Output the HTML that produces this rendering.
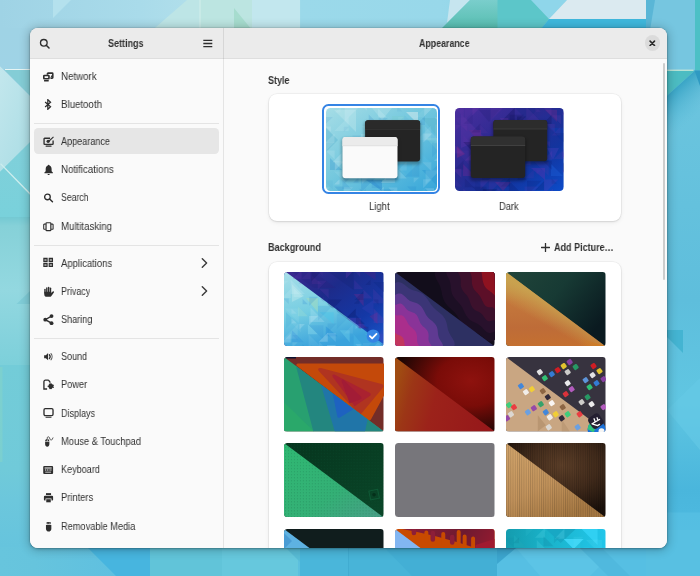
<!DOCTYPE html>
<html>
<head>
<meta charset="utf-8">
<title>Settings - Appearance</title>
<style>
html,body{margin:0;padding:0;}
body{width:700px;height:576px;overflow:hidden;position:relative;background:#6cc6da;font-family:"Liberation Sans",sans-serif;font-size:10px;color:#303030;}
#wall{position:absolute;left:0;top:0;width:700px;height:576px;display:block;}
#win{position:absolute;left:30px;top:28px;width:637px;height:520px;border-radius:8px;overflow:hidden;background:#fafafa;
 box-shadow:0 0 0 0.6px rgba(0,0,0,0.12),0 1px 3px rgba(0,0,0,0.24),0 1px 10px 1.5px rgba(0,0,0,0.2);}
.hdr{position:absolute;top:0;height:30.9px;background:#ebebeb;border-bottom:0.9px solid #dedede;box-sizing:border-box;z-index:2;}
#hdrL{left:0;width:193px;}
#hdrR{left:193px;width:444px;}
#side{position:absolute;left:0;top:30px;width:193px;height:490px;background:#fafafa;}
#vdiv{position:absolute;left:192.7px;top:0;width:1.1px;height:520px;background:rgba(0,0,0,0.085);z-index:3;}
#main{position:absolute;left:194px;top:30px;width:443px;height:490px;background:#fafafa;overflow:hidden;}
.t{will-change:transform;position:absolute;white-space:nowrap;line-height:12px;height:12px;transform-origin:0 50%;}
.b{font-weight:bold;}
.row{position:absolute;left:0;width:193px;height:28px;}
.sel{position:absolute;left:4px;top:69px;width:185px;height:26.9px;border-radius:4.2px;background:#e6e6e6;}
.sep{position:absolute;left:4px;width:185px;height:0.8px;background:#e4e4e4;}
.ic{position:absolute;left:13px;width:11.3px;height:11.3px;display:block;fill:#2e2e2e;}
.chev{position:absolute;left:171px;width:7px;height:10px;display:block;}
.card{position:absolute;background:#fff;border-radius:8px;box-shadow:0 0 0 0.7px rgba(0,0,0,0.05),0 1px 2px rgba(0,0,0,0.09),0 2px 5px rgba(0,0,0,0.05);}
.thumb{position:absolute;border-radius:3.5px;overflow:hidden;display:block;line-height:0;}
.thumb svg{display:block;}
</style>
</head>
<body>
<svg id="wall" viewBox="0 0 700 576">
 <defs>
  <linearGradient id="wL" x1="0" y1="0" x2="0" y2="1"><stop offset="0.0000" stop-color="#9fd3e5"/><stop offset="0.0757" stop-color="#9fd3e6"/><stop offset="0.2135" stop-color="#80d0da"/><stop offset="0.3440" stop-color="#79d1db"/><stop offset="0.3449" stop-color="#74c9d3"/><stop offset="0.3613" stop-color="#86d1d8"/><stop offset="0.4781" stop-color="#93d8e0"/><stop offset="0.5693" stop-color="#84d2dc"/><stop offset="0.6150" stop-color="#7cd0da"/><stop offset="0.6159" stop-color="#73ccd8"/><stop offset="0.8066" stop-color="#70cad9"/><stop offset="0.8613" stop-color="#6cc7dc"/><stop offset="1.0000" stop-color="#62c2de"/></linearGradient>
  <linearGradient id="wP" x1="0" y1="0" x2="1" y2="1">
   <stop offset="0" stop-color="#c3e7ed"/><stop offset="1" stop-color="#a6dbe3"/>
  </linearGradient>
  <linearGradient id="wR" x1="0" y1="0" x2="0" y2="1"><stop offset="0.0000" stop-color="#78c7e0"/><stop offset="0.0791" stop-color="#6ac4de"/><stop offset="0.4545" stop-color="#5ebedc"/><stop offset="0.6522" stop-color="#60c6e2"/><stop offset="0.8300" stop-color="#4ab6dc"/><stop offset="0.8735" stop-color="#4cb8de"/><stop offset="0.8755" stop-color="#54bee2"/><stop offset="1.0000" stop-color="#58c0e2"/></linearGradient>
  <linearGradient id="wT" x1="0" y1="0" x2="1" y2="0">
   <stop offset="0" stop-color="#9fd3e5"/><stop offset="0.200" stop-color="#a9dbea"/><stop offset="0.420" stop-color="#bfe6ec"/><stop offset="0.430" stop-color="#9bd9ea"/><stop offset="0.630" stop-color="#98d8ea"/><stop offset="1" stop-color="#70c6de"/>
  </linearGradient>
  <linearGradient id="wBL" x1="0" y1="0" x2="1" y2="0"><stop offset="0" stop-color="#67c5dd"/><stop offset="0.300" stop-color="#66c4dd"/><stop offset="1" stop-color="#5fc0e0"/></linearGradient>
  <linearGradient id="wRd" gradientUnits="userSpaceOnUse" x1="677" y1="86" x2="700" y2="112"><stop offset="0" stop-color="#38a4c5"/><stop offset="1" stop-color="#5cbcd9" stop-opacity="0"/></linearGradient>
  <linearGradient id="wTe" x1="0" y1="0" x2="0" y2="1">
   <stop offset="0" stop-color="#7acecc"/><stop offset="1" stop-color="#54bcae"/>
  </linearGradient>
 </defs>
 <!-- base -->
 <rect width="700" height="576" fill="#62c0da"/>
 <!-- top strip -->
 <rect x="0" y="0" width="700" height="60" fill="url(#wT)"/>
 <polygon points="53,0 71,0 53,18" fill="#b4e1ed"/>
 <polygon points="187,0 300,0 300,60 118,60" fill="#bde5e6"/>
 <polygon points="200,0 252,0 252,60 200,60" fill="#bce5e0" opacity="0.800"/>
 <rect x="199.500" y="0" width="1" height="40" fill="#d4efec"/>
 <polygon points="234,8 252,30 234,30" fill="#a6dcce"/>
 <polygon points="252,0 300,0 300,60 252,60" fill="#c2e7ee"/>
 <polygon points="450,0 470,0 447,23" fill="#c6e5ef"/>
 <polygon points="470,0 540,0 552,14 540,30 440,30" fill="url(#wTe)"/>
 <polygon points="497.500,0 532,0 549,19 540,30 497.500,30" fill="#5cc6c9"/>
 <polygon points="531,0 567,0 549,19" fill="#8fd6ea"/>
 <polygon points="567,0 646,0 646,19 549,19" fill="#dbeaf0"/>
 <polygon points="549,19 646,19 646,30 540,30" fill="#3fb8dd"/>
 <rect x="646" y="0" width="54" height="70" fill="#76c6e0"/>
 <polygon points="646,0 655,0 650,30 646,30" fill="#5ab6d6"/>
 <rect x="695" y="0" width="5" height="70" fill="#4cc0c6"/>
 <!-- left strip -->
 <rect x="0" y="28" width="60" height="548" fill="url(#wL)"/>
 <polygon points="0,66.400 60,126 60,112 0,171.500" fill="url(#wP)"/>
 <polygon points="0,66.400 40,106 40,132 0,171.500" fill="url(#wP)"/>
 <polygon points="4,69.500 40,69.500 40,105.500" fill="#84cdd6"/>
 <rect x="5" y="69" width="40" height="1" fill="#e6f5f4"/>
 <polygon points="0,164 1.200,163.500 40,203 38.800,204" fill="#cdeeee"/>
 <polygon points="30,291 30,304 16.500,304" fill="#80cdd8"/>
 <rect x="0" y="367" width="2.500" height="95" fill="#80d2cc" opacity="0.700"/>
 <!-- right strip -->
 <rect x="646" y="70" width="54" height="506" fill="url(#wR)"/>
 <polygon points="660,70.500 695,70.500 660,102" fill="#4cbcc2"/>
 <polygon points="660,102 695,70.500 700,70.500 700,150 660,150" fill="url(#wRd)"/>
 <rect x="660" y="69.700" width="33.500" height="1" fill="#dcefd8"/>
 <polygon points="694.500,70.500 700,70.500 700,86" fill="#2f9ac2"/>
 <polygon points="660,330 683,330 683,353" fill="#44b4d2"/>
 <polygon points="667,410 700,378 700,450" fill="#66cae6" opacity="0.600"/>
 <!-- bottom strip -->
 <rect x="30" y="530" width="670" height="46" fill="#5cc0de"/>
 <polygon points="0,547 88,547 88,548 116,576 0,576" fill="url(#wBL)"/>
 <polygon points="88,548 150,548 150,576 116,576" fill="#47b5df"/>
 <rect x="150" y="530" width="72" height="46" fill="#61c4d9"/>
 <rect x="222" y="530" width="76" height="46" fill="#66c8dd"/>
 <polygon points="286,548 300,562 300,548" fill="#58bcd6"/>
 <rect x="300" y="530" width="49" height="46" fill="#4ab6da"/>
 <rect x="348.500" y="530" width="1" height="46" fill="#38a2c8"/>
 <rect x="349" y="530" width="148" height="46" fill="#48b4d8"/>
 <polygon points="385,548 497,548 497,576 412,576" fill="#43afd5"/>
 <rect x="497" y="530" width="149" height="46" fill="#56bfe3"/>
 <polygon points="497,548 516,548 497,564" fill="#3ca6cf"/>
 <polygon points="516,548 580,548 600,566 590,576 540,576" fill="#5cc4e6"/>
 <polygon points="580,548 602,548 630,576 608,576" fill="#50b9de"/>
 <rect x="646" y="530" width="54" height="46" fill="#58c0e2"/>
</svg>

<div id="win">
<div class="hdr" id="hdrL"><svg style="position:absolute;left:8.700px;top:9.700px;width:11.300px;height:11.300px" viewBox="0 0 16 16"><circle cx="6.800" cy="6.800" r="4.700" fill="none" stroke="#2e2e2e" stroke-width="1.900"/><path d="M10.300 10.300 14.200 14.200" stroke="#2e2e2e" stroke-width="2.100" stroke-linecap="round"/></svg><span class="t b" style="left:77.800px;top:10px;transform:scaleX(0.900)">Settings</span><svg style="position:absolute;left:173.200px;top:10.700px;width:9.600px;height:9px" viewBox="0 0 9.600 9"><path d="M0.300 1.300H9.300M0.300 4.500H9.300M0.300 7.700H9.300" stroke="#2e2e2e" stroke-width="1.300"/></svg></div>
<div class="hdr" id="hdrR"><span class="t b" style="left:196px;top:10px;transform:scaleX(0.883)">Appearance</span><div style="position:absolute;left:422px;top:7.400px;width:15.200px;height:15.200px;border-radius:50%;background:#dbdbdb"></div><svg style="position:absolute;left:426.300px;top:11.700px;width:6.600px;height:6.600px" viewBox="0 0 6.600 6.600"><path d="M1.100 1.100 5.500 5.500M5.500 1.100 1.100 5.500" stroke="#2a2a2a" stroke-width="1.600" stroke-linecap="round"/></svg></div>
 <div id="side">
<div class="sep" style="top:65.1px"></div>
<div class="sep" style="top:186.7px"></div>
<div class="sep" style="top:280.3px"></div>
<div class="sel" style="top:69.6px"></div>
<svg class="ic" style="top:12.65px" viewBox="0 0 16 16"><path d="M6.300 5.200V3.900a.9.900 0 0 1 .9-.9h5.800a.9.900 0 0 1 .9.900v5.400a.9.900 0 0 1-.9.900H10.600" fill="none" stroke="#2e2e2e" stroke-width="2.200"/><rect x="1.150" y="6.350" width="7.300" height="4.700" rx="0.700" fill="#fafafa" stroke="#2e2e2e" stroke-width="2.300"/><rect x="1.400" y="12.900" width="6.800" height="1.800" rx="0.400"/><path d="M12.900 5v4.200h-2.400z"/></svg>
<span class="t" style="left:31.4px;top:12.80px;transform:scaleX(0.972)">Network</span>
<svg class="ic" style="top:40.95px" viewBox="0 0 16 16"><path d="M3 4.200 10.700 11 6.800 14.600V0.900L10.700 4.600 3 11.400" fill="none" stroke="#2e2e2e" stroke-width="1.750" stroke-linejoin="miter"/></svg>
<span class="t" style="left:31.4px;top:41.10px;transform:scaleX(0.968)">Bluetooth</span>
<svg class="ic" style="top:77.65px" viewBox="0 0 16 16"><path d="M10 3.200H2.300a.8.800 0 0 0-.8.800v7a.8.800 0 0 0 .8.800h11.200a.8.800 0 0 0 .8-.8V6.500" fill="none" stroke="#2e2e2e" stroke-width="1.900"/><rect x="3.600" y="13.600" width="8.600" height="1.500" rx="0.500"/><circle cx="7.300" cy="7.500" r="2.300"/><path d="M8.200 6.200 14.300 0.600 15.400 1.700 9.500 7.500z"/></svg>
<span class="t" style="left:31.4px;top:77.80px;transform:scaleX(0.909)">Appearance</span>
<svg class="ic" style="top:105.95px" viewBox="0 0 16 16"><path d="M8 1.200c.7 0 1.200.5 1.200 1.100C11 2.900 12.200 4.600 12.200 7v3.200l1.800 2V13H2v-.8l1.800-2V7c0-2.400 1.200-4.100 3-4.700C6.800 1.700 7.300 1.200 8 1.200z"/><path d="M6.400 14h3.200a1.600 1.600 0 0 1-3.200 0z"/></svg>
<span class="t" style="left:31.4px;top:106.10px;transform:scaleX(0.968)">Notifications</span>
<svg class="ic" style="top:134.25px" viewBox="0 0 16 16"><circle cx="6.300" cy="7" r="4" fill="none" stroke="#2e2e2e" stroke-width="1.900"/><path d="M9.400 10 13.400 13.900" stroke="#2e2e2e" stroke-width="2.100" stroke-linecap="round"/></svg>
<span class="t" style="left:31.4px;top:134.40px;transform:scaleX(0.871)">Search</span>
<svg class="ic" style="top:162.55px" viewBox="0 0 16 16"><rect x="4.300" y="2.450" width="6.800" height="11.300" rx="1" fill="none" stroke="#2e2e2e" stroke-width="1.700"/><path d="M3.900 4.400H1.700a.7.700 0 0 0-.7.700V11a.7.700 0 0 0 .7.700H3.900M11.400 4.400h2.200a.7.700 0 0 1 .7.700V11a.7.700 0 0 1-.7.700H11.400" fill="none" stroke="#2e2e2e" stroke-width="1.500"/></svg>
<span class="t" style="left:31.4px;top:162.70px;transform:scaleX(0.965)">Multitasking</span>
<svg class="ic" style="top:199.45px" viewBox="0 0 16 16"><path d="M.4 1.200h6.200v5.900H.4zM2 3.500v1.400h3V3.500zM8 1.200h6.200v5.900H8zM9.600 3.500v1.400h3V3.500zM.4 8.300h6.200v5.900H.4zM2 10.600V12h3v-1.400zM8 8.300h6.200v5.900H8zM9.600 10.600V12h3v-1.400z" fill-rule="evenodd"/></svg>
<span class="t" style="left:31.4px;top:199.60px;transform:scaleX(0.950)">Applications</span>
<svg class="ic" style="top:227.75px" viewBox="0 0 16 16"><rect x="1.800" y="3.800" width="2" height="7" rx="1"/><rect x="4.400" y="1.800" width="2" height="8" rx="1"/><rect x="7" y="1" width="2" height="8.500" rx="1"/><rect x="9.600" y="2.200" width="2" height="8" rx="1"/><path d="M1.800 8h9.800v2l2.200-2.100c1-.9 2.300.1 1.600 1.200l-3.500 4.900c-.6.900-1.500 1.400-2.600 1.400H5.300c-2 0-3.500-1.500-3.500-3.400z"/></svg>
<span class="t" style="left:31.4px;top:227.90px;transform:scaleX(0.891)">Privacy</span>
<svg class="ic" style="top:256.05px" viewBox="0 0 16 16"><circle cx="12.100" cy="3" r="2.700"/><circle cx="3.200" cy="8" r="2.700"/><circle cx="12.100" cy="13" r="2.700"/><path d="M12.100 3 3.200 8l8.900 5" fill="none" stroke="#2e2e2e" stroke-width="1.900"/></svg>
<span class="t" style="left:31.4px;top:256.20px;transform:scaleX(0.909)">Sharing</span>
<svg class="ic" style="top:292.85px" viewBox="0 0 16 16"><path d="M1.600 6H4L7.200 3V13.200L4 10.200H1.600z"/><path d="M9 5.300c1.200 1.400 1.200 4.200 0 5.600" fill="none" stroke="#2e2e2e" stroke-width="1.800" stroke-linecap="round"/><path d="M11.300 3.800c2 2.300 2 6.300 0 8.600" fill="none" stroke="#2e2e2e" stroke-width="1.600" stroke-linecap="round" opacity="0.8"/></svg>
<span class="t" style="left:31.4px;top:293.00px;transform:scaleX(0.903)">Sound</span>
<svg class="ic" style="top:321.15px" viewBox="0 0 16 16"><path d="M5.800 14.200H1.300V3.800c0-1.200.9-2.100 2.100-2.100h3.800c.5 0 .9.200 1.200.6l2 2.900" fill="none" stroke="#2e2e2e" stroke-width="1.900"/><circle cx="11" cy="10.300" r="3.500"/><rect x="13.500" y="8.200" width="2.300" height="1.400"/><rect x="13.500" y="11" width="2.300" height="1.400"/><rect x="6.500" y="9.600" width="2" height="1.500"/><rect x="9" y="6.300" width="3.500" height="2"/><rect x="9" y="12.500" width="3.500" height="1.800"/></svg>
<span class="t" style="left:31.4px;top:321.30px;transform:scaleX(0.922)">Power</span>
<svg class="ic" style="top:349.45px" viewBox="0 0 16 16"><rect x="1.400" y="2.400" width="12.800" height="9.800" rx="1.800" fill="none" stroke="#2e2e2e" stroke-width="1.900"/><rect x="3.600" y="13.800" width="8.400" height="1.500" rx="0.500"/></svg>
<span class="t" style="left:31.4px;top:349.60px;transform:scaleX(0.903)">Displays</span>
<svg class="ic" style="top:377.65px" viewBox="0 0 16 16"><path d="M3 8.300h6V11.500c0 2.300-1.300 3.700-3 3.700S3 13.800 3 11.500z"/><path d="M3 7.500c0-1.900 1-3.100 2.500-3.300V7.500zM6.500 4.200c1.500.2 2.500 1.400 2.500 3.300H6.500z"/><path d="M6 4.600V2.600c0-1.700 2.400-2.100 3.100-.4l.9 2.500c.6 1.500 2.300 1.500 3 .1l1.100-2.200" fill="none" stroke="#2e2e2e" stroke-width="1.100" stroke-linecap="round"/></svg>
<span class="t" style="left:31.4px;top:377.80px;transform:scaleX(0.937)">Mouse &amp; Touchpad</span>
<svg class="ic" style="top:405.95px" viewBox="0 0 16 16"><path d="M1.700 3h11.200a1.400 1.400 0 0 1 1.400 1.400v8.400a1.400 1.400 0 0 1-1.400 1.400H1.700A1.400 1.400 0 0 1 .3 12.800V4.400A1.400 1.400 0 0 1 1.700 3zM2.300 5v1.500h10V5zM2.800 7.700v1.400h1.800V7.700zM5.600 7.700v1.400H7V7.700zM7.900 7.700v1.400h1.400V7.700zM10.200 7.700v1.400h1.800V7.700zM3.200 10.800v1.400h8.200v-1.400z" fill-rule="evenodd"/></svg>
<span class="t" style="left:31.4px;top:406.10px;transform:scaleX(0.907)">Keyboard</span>
<svg class="ic" style="top:434.25px" viewBox="0 0 16 16"><path d="M4.200 1.600h7.200v2.700H4.200z"/><path d="M2.800 5.200h10A1.500 1.500 0 0 1 14.300 6.700V11a1 1 0 0 1-1 1H12V9.200H3.600V12H2.300a1 1 0 0 1-1-1V6.700A1.500 1.500 0 0 1 2.800 5.200z"/><path d="M4.600 10.200h6.400v4.400H4.600z"/></svg>
<span class="t" style="left:31.4px;top:434.40px;transform:scaleX(0.935)">Printers</span>
<svg class="ic" style="top:462.55px" viewBox="0 0 16 16"><path d="M5.200 1.400h5.600v3.200H5.200z"/><path d="M6.400 2.500h1.100v1.100H6.400zM8.500 2.500h1.100v1.100H8.500z" fill="#fafafa"/><path d="M4.200 5.600h7.600V11c0 2.500-1.700 4-3.800 4s-3.800-1.500-3.800-4z"/></svg>
<span class="t" style="left:31.4px;top:462.70px;transform:scaleX(0.923)">Removable Media</span>
<svg class="chev" style="top:199.80px" viewBox="0 0 7 10"><path d="M1.300 0.800 5.600 5 1.300 9.200" fill="none" stroke="#3a3a3a" stroke-width="1.400" stroke-linecap="round" stroke-linejoin="round"/></svg>
<svg class="chev" style="top:228.10px" viewBox="0 0 7 10"><path d="M1.300 0.800 5.600 5 1.300 9.200" fill="none" stroke="#3a3a3a" stroke-width="1.400" stroke-linecap="round" stroke-linejoin="round"/></svg>
 </div>
 <div id="main">
<span class="t b" style="left:44.2px;top:16.80px;transform:scaleX(0.900)">Style</span>
<div class="card" style="left:44.8px;top:35.8px;width:352.7px;height:126.9px"></div>
<div style="position:absolute;left:98.0px;top:46.3px;width:114.2px;height:85.8px;border:2px solid #3584e4;border-radius:6.5px"></div>
<div class="thumb" style="left:101.5px;top:49.6px;width:111.5px;height:83.2px;border-radius:4.5px"><svg width="111.5" height="83.2" viewBox="0 0 111.5 83.2"><defs><linearGradient id="lg" x1="0" y1="0" x2="1" y2="1"><stop offset="0" stop-color="#a6dde6"/><stop offset="0.45" stop-color="#74c8de"/><stop offset="1" stop-color="#36a6da"/></linearGradient>
<filter id="sh" x="-20%" y="-20%" width="140%" height="150%"><feGaussianBlur stdDeviation="1.600"/></filter></defs>
<rect width="111.500" height="83.200" fill="url(#lg)"/>
<g opacity="0.5"><polygon points="8,2 30,2 30,24" fill="#c6ecee" opacity="0.7"/><polygon points="46,0 66,0 56,12" fill="#b6e4ea" opacity="0.8"/><polygon points="80,4 92,4 92,16" fill="#e6f2f2" opacity="0.9"/><polygon points="66,8 80,8 66,22" fill="#7cccd0" opacity="0.8"/><polygon points="96,10 111,10 111,28" fill="#58b4c8" opacity="0.7"/><polygon points="0,20 12,32 0,44" fill="#58b0d0" opacity="0.8"/><polygon points="4,50 16,62 4,62" fill="#4aa6d4"/><polygon points="18,58 30,70 18,70" fill="#6cc4e0"/><polygon points="40,72 56,72 56,83" fill="#2c8cd0"/><polygon points="70,56 86,56 86,72" fill="#48b4e0"/><polygon points="90,40 104,54 90,54" fill="#56bce2"/><polygon points="96,62 111,62 111,78" fill="#2c98d4"/><polygon points="60,60 72,72 60,72" fill="#3aa6dc"/><polygon points="14,36 26,36 26,48" fill="#98dce6" opacity="0.7"/><polygon points="100,30 111,30 111,42" fill="#7cccd8" opacity="0.8"/></g><g><polygon points="14.6,-0.9 14.6,4.5 9.2,4.5" fill="#effcff" opacity="0.09"/><polygon points="18.7,-1.2 33.1,-1.2 18.7,13.2" fill="#effcff" opacity="0.17"/><polygon points="35.5,-2.6 40.9,-2.6 40.9,2.8" fill="#effcff" opacity="0.15"/><polygon points="51.9,0.2 60.9,9.2 51.9,9.2" fill="#effcff" opacity="0.15"/><polygon points="71.0,-2.0 76.4,3.4 71.0,3.4" fill="#1878c8" opacity="0.07"/><polygon points="98.7,0.2 98.7,9.2 89.7,9.2" fill="#effcff" opacity="0.06"/><polygon points="98.3,-0.7 107.3,-0.7 98.3,8.3" fill="#effcff" opacity="0.20"/><polygon points="106.6,-1.1 121.0,-1.1 121.0,13.3" fill="#1878c8" opacity="0.19"/><polygon points="-2.1,8.9 6.9,8.9 -2.1,17.9" fill="#1878c8" opacity="0.11"/><polygon points="22.7,8.5 22.7,22.9 8.3,22.9" fill="#effcff" opacity="0.12"/><polygon points="42.7,6.5 51.7,15.5 42.7,15.5" fill="#1878c8" opacity="0.16"/><polygon points="52.8,9.9 61.8,9.9 52.8,18.9" fill="#1878c8" opacity="0.11"/><polygon points="62.1,8.7 67.5,14.1 62.1,14.1" fill="#effcff" opacity="0.05"/><polygon points="72.2,9.1 77.6,9.1 72.2,14.5" fill="#effcff" opacity="0.07"/><polygon points="78.4,7.2 92.8,21.6 78.4,21.6" fill="#1878c8" opacity="0.06"/><polygon points="99.0,8.0 99.0,17.0 90.0,17.0" fill="#1878c8" opacity="0.15"/><polygon points="108.7,9.5 117.7,9.5 117.7,18.5" fill="#effcff" opacity="0.19"/><polygon points="-0.6,18.4 4.8,18.4 4.8,23.8" fill="#effcff" opacity="0.18"/><polygon points="17.8,18.7 23.2,18.7 17.8,24.1" fill="#1878c8" opacity="0.07"/><polygon points="35.8,18.0 50.2,18.0 50.2,32.4" fill="#effcff" opacity="0.09"/><polygon points="42.6,15.4 48.0,15.4 42.6,20.8" fill="#effcff" opacity="0.07"/><polygon points="51.8,17.2 66.2,17.2 51.8,31.6" fill="#effcff" opacity="0.06"/><polygon points="81.4,16.0 81.4,25.0 72.4,25.0" fill="#effcff" opacity="0.14"/><polygon points="79.7,18.4 88.7,18.4 79.7,27.4" fill="#effcff" opacity="0.14"/><polygon points="105.2,17.5 105.2,31.9 90.8,31.9" fill="#effcff" opacity="0.08"/><polygon points="99.2,18.2 113.6,32.6 99.2,32.6" fill="#effcff" opacity="0.11"/><polygon points="108.8,16.4 123.2,16.4 108.8,30.8" fill="#effcff" opacity="0.06"/><polygon points="8.5,25.5 8.5,34.5 -0.5,34.5" fill="#effcff" opacity="0.16"/><polygon points="26.6,27.2 35.6,27.2 26.6,36.2" fill="#1878c8" opacity="0.07"/><polygon points="35.0,26.1 40.4,26.1 35.0,31.5" fill="#effcff" opacity="0.14"/><polygon points="42.5,25.3 47.9,25.3 42.5,30.7" fill="#effcff" opacity="0.08"/><polygon points="52.7,25.5 61.7,25.5 61.7,34.5" fill="#1878c8" opacity="0.16"/><polygon points="71.1,26.9 80.1,26.9 80.1,35.9" fill="#effcff" opacity="0.06"/><polygon points="80.0,26.1 89.0,35.1 80.0,35.1" fill="#1878c8" opacity="0.14"/><polygon points="97.4,25.4 106.4,25.4 97.4,34.4" fill="#effcff" opacity="0.19"/><polygon points="116.2,26.5 116.2,35.5 107.2,35.5" fill="#effcff" opacity="0.06"/><polygon points="-0.2,34.0 8.8,34.0 -0.2,43.0" fill="#effcff" opacity="0.12"/><polygon points="16.5,34.2 25.5,34.2 16.5,43.2" fill="#effcff" opacity="0.08"/><polygon points="35.5,34.3 35.5,43.3 26.5,43.3" fill="#effcff" opacity="0.18"/><polygon points="35.5,34.3 40.9,34.3 40.9,39.7" fill="#1878c8" opacity="0.12"/><polygon points="61.6,35.6 61.6,44.6 52.6,44.6" fill="#1878c8" opacity="0.06"/><polygon points="62.5,35.8 67.9,35.8 62.5,41.2" fill="#1878c8" opacity="0.05"/><polygon points="94.0,33.3 94.0,38.7 88.6,38.7" fill="#effcff" opacity="0.20"/><polygon points="106.0,34.8 120.4,34.8 106.0,49.2" fill="#1878c8" opacity="0.13"/><polygon points="-0.3,42.6 8.7,42.6 8.7,51.6" fill="#effcff" opacity="0.14"/><polygon points="15.5,45.2 15.5,54.2 6.5,54.2" fill="#effcff" opacity="0.20"/><polygon points="16.3,43.6 25.3,52.6 16.3,52.6" fill="#effcff" opacity="0.12"/><polygon points="44.7,43.0 44.7,52.0 35.7,52.0" fill="#effcff" opacity="0.15"/><polygon points="69.4,43.1 78.4,43.1 78.4,52.1" fill="#effcff" opacity="0.17"/><polygon points="84.0,45.3 84.0,50.7 78.6,50.7" fill="#1878c8" opacity="0.11"/><polygon points="116.9,44.1 116.9,53.1 107.9,53.1" fill="#effcff" opacity="0.14"/><polygon points="8.8,53.6 17.8,53.6 8.8,62.6" fill="#effcff" opacity="0.19"/><polygon points="16.1,53.0 21.5,58.4 16.1,58.4" fill="#effcff" opacity="0.19"/><polygon points="26.5,53.5 35.5,62.5 26.5,62.5" fill="#1878c8" opacity="0.05"/><polygon points="39.4,54.9 39.4,60.3 34.0,60.3" fill="#effcff" opacity="0.16"/><polygon points="43.2,53.5 52.2,62.5 43.2,62.5" fill="#1878c8" opacity="0.16"/><polygon points="54.9,54.6 63.9,63.6 54.9,63.6" fill="#effcff" opacity="0.17"/><polygon points="70.1,53.2 70.1,62.2 61.1,62.2" fill="#effcff" opacity="0.20"/><polygon points="80.7,53.5 80.7,62.5 71.7,62.5" fill="#effcff" opacity="0.09"/><polygon points="93.4,54.3 93.4,68.7 79.0,68.7" fill="#1878c8" opacity="0.16"/><polygon points="96.4,54.3 105.4,54.3 105.4,63.3" fill="#effcff" opacity="0.13"/><polygon points="115.7,52.7 115.7,61.7 106.7,61.7" fill="#1878c8" opacity="0.16"/><polygon points="8.0,63.4 17.0,63.4 17.0,72.4" fill="#effcff" opacity="0.09"/><polygon points="18.6,60.8 33.0,60.8 18.6,75.2" fill="#1878c8" opacity="0.15"/><polygon points="36.0,61.6 50.4,61.6 36.0,76.0" fill="#effcff" opacity="0.14"/><polygon points="68.9,60.6 68.9,75.0 54.5,75.0" fill="#effcff" opacity="0.19"/><polygon points="71.8,61.4 80.8,70.4 71.8,70.4" fill="#effcff" opacity="0.16"/><polygon points="99.6,62.2 114.0,62.2 99.6,76.6" fill="#effcff" opacity="0.12"/><polygon points="-2.3,72.5 6.7,72.5 6.7,81.5" fill="#1878c8" opacity="0.06"/><polygon points="13.5,71.2 13.5,76.6 8.1,76.6" fill="#effcff" opacity="0.20"/><polygon points="16.5,72.0 25.5,81.0 16.5,81.0" fill="#1878c8" opacity="0.15"/><polygon points="32.5,69.4 32.5,74.8 27.1,74.8" fill="#1878c8" opacity="0.16"/><polygon points="35.1,69.9 49.5,69.9 35.1,84.3" fill="#1878c8" opacity="0.18"/><polygon points="45.8,70.9 54.8,79.9 45.8,79.9" fill="#1878c8" opacity="0.15"/><polygon points="87.7,69.7 93.1,69.7 87.7,75.1" fill="#effcff" opacity="0.13"/><polygon points="97.1,71.3 106.1,71.3 97.1,80.3" fill="#effcff" opacity="0.13"/><polygon points="-1.6,79.4 3.8,79.4 -1.6,84.8" fill="#effcff" opacity="0.15"/><polygon points="8.4,78.5 17.4,78.5 17.4,87.5" fill="#1878c8" opacity="0.18"/><polygon points="18.1,79.2 27.1,79.2 18.1,88.2" fill="#effcff" opacity="0.12"/><polygon points="39.9,80.7 39.9,95.1 25.5,95.1" fill="#1878c8" opacity="0.13"/><polygon points="33.7,80.4 42.7,89.4 33.7,89.4" fill="#1878c8" opacity="0.19"/><polygon points="57.8,78.7 57.8,93.1 43.4,93.1" fill="#effcff" opacity="0.16"/><polygon points="54.0,81.3 68.4,81.3 54.0,95.7" fill="#1878c8" opacity="0.19"/><polygon points="62.3,79.6 71.3,79.6 71.3,88.6" fill="#effcff" opacity="0.14"/><polygon points="81.1,78.4 90.1,78.4 90.1,87.4" fill="#1878c8" opacity="0.14"/><polygon points="99.4,79.5 99.4,88.5 90.4,88.5" fill="#effcff" opacity="0.05"/><polygon points="99.0,80.2 108.0,80.2 108.0,89.2" fill="#effcff" opacity="0.18"/><polygon points="121.4,79.5 121.4,93.9 107.0,93.9" fill="#1878c8" opacity="0.16"/></g><rect x="38.10000000000002" y="13.300000000000011" width="57" height="43.2" rx="4" fill="#000" opacity="0.300" filter="url(#sh)"/><rect x="39.10000000000002" y="12.300000000000011" width="55" height="41.2" rx="3" fill="#242424"/><path d="M39.10000000000002,21.30000000000001 V15.300000000000011 a3,3 0 0 1 3,-3 H91.10000000000002 a3,3 0 0 1 3,3 V21.30000000000001Z" fill="#2a2a2a"/><rect x="39.10000000000002" y="21.00000000000001" width="55" height="0.600" fill="#3a3a3a"/><rect x="15.5" y="29.900000000000006" width="57" height="43.3" rx="4" fill="#000" opacity="0.300" filter="url(#sh)"/><rect x="16.5" y="28.900000000000006" width="55" height="41.3" rx="3" fill="#fafafa"/><path d="M16.5,37.900000000000006 V31.900000000000006 a3,3 0 0 1 3,-3 H68.5 a3,3 0 0 1 3,3 V37.900000000000006Z" fill="#ebebeb"/><rect x="16.5" y="37.60000000000001" width="55" height="0.600" fill="#d8d8d8"/></svg></div>
<div class="thumb" style="left:231.2px;top:49.9px;width:108.6px;height:83.1px;border-radius:4.5px"><svg width="108.6" height="83.1" viewBox="0 0 108.6 83.1"><defs><linearGradient id="dg" x1="0" y1="0" x2="1" y2="1"><stop offset="0" stop-color="#4b2e9e"/><stop offset="0.4" stop-color="#2a2a90"/><stop offset="0.7" stop-color="#12349e"/><stop offset="1" stop-color="#0c4cca"/></linearGradient>
<filter id="sh2" x="-20%" y="-20%" width="140%" height="150%"><feGaussianBlur stdDeviation="1.600"/></filter></defs>
<rect width="108.600" height="83.100" fill="url(#dg)"/>
<g opacity="0.5"><polygon points="6,6 30,30 6,40" fill="#5a34a6" opacity="0.8"/><polygon points="24,2 44,2 34,14" fill="#2a2482" opacity="0.8"/><polygon points="60,0 84,0 72,12" fill="#1a2a88" opacity="0.8"/><polygon points="90,2 102,2 102,14" fill="#5a2a8c"/><polygon points="14,22 26,22 26,36" fill="#7a2c90" opacity="0.8"/><polygon points="2,38 10,46 2,50" fill="#7a2a88"/><polygon points="8,56 20,68 8,68" fill="#5c2a96"/><polygon points="92,40 104,40 98,52" fill="#3a3cb4"/><polygon points="76,60 90,60 90,72" fill="#4a34b0"/><polygon points="96,56 108,68 96,68" fill="#1a58d0"/><polygon points="40,74 56,74 48,83" fill="#5a2c90"/><polygon points="20,72 32,83 20,83" fill="#1a2c90"/><polygon points="96,20 108,20 108,34" fill="#0c3cae"/></g><g><polygon points="-0.2,-0.0 8.8,-0.0 8.8,9.0" fill="#7a3ab0" opacity="0.12"/><polygon points="9.8,-2.1 24.2,-2.1 9.8,12.3" fill="#7a3ab0" opacity="0.11"/><polygon points="17.4,-1.6 26.4,-1.6 17.4,7.4" fill="#7a3ab0" opacity="0.25"/><polygon points="35.5,-1.8 49.9,-1.8 35.5,12.6" fill="#7a3ab0" opacity="0.17"/><polygon points="59.7,-0.3 59.7,14.1 45.3,14.1" fill="#040a48" opacity="0.24"/><polygon points="71.2,-1.2 85.6,13.2 71.2,13.2" fill="#7a3ab0" opacity="0.15"/><polygon points="80.4,-1.6 85.8,3.8 80.4,3.8" fill="#7a3ab0" opacity="0.13"/><polygon points="87.6,-1.1 96.6,-1.1 96.6,7.9" fill="#7a3ab0" opacity="0.17"/><polygon points="115.7,-2.4 115.7,6.6 106.7,6.6" fill="#7a3ab0" opacity="0.25"/><polygon points="-2.1,9.6 12.3,9.6 12.3,24.0" fill="#7a3ab0" opacity="0.08"/><polygon points="17.7,6.7 17.7,15.7 8.7,15.7" fill="#040a48" opacity="0.08"/><polygon points="44.4,9.9 53.4,9.9 53.4,18.9" fill="#7a3ab0" opacity="0.23"/><polygon points="54.7,6.7 69.1,6.7 54.7,21.1" fill="#040a48" opacity="0.16"/><polygon points="62.1,8.6 71.1,8.6 62.1,17.6" fill="#040a48" opacity="0.25"/><polygon points="96.6,7.0 96.6,16.0 87.6,16.0" fill="#040a48" opacity="0.20"/><polygon points="97.0,7.3 106.0,7.3 106.0,16.3" fill="#7a3ab0" opacity="0.17"/><polygon points="-2.6,16.7 6.4,16.7 -2.6,25.7" fill="#7a3ab0" opacity="0.15"/><polygon points="6.5,17.8 11.9,17.8 11.9,23.2" fill="#7a3ab0" opacity="0.11"/><polygon points="25.3,15.5 25.3,24.5 16.3,24.5" fill="#040a48" opacity="0.12"/><polygon points="24.4,15.9 33.4,24.9 24.4,24.9" fill="#7a3ab0" opacity="0.10"/><polygon points="44.6,18.8 53.6,18.8 44.6,27.8" fill="#7a3ab0" opacity="0.08"/><polygon points="52.6,16.2 61.6,16.2 61.6,25.2" fill="#7a3ab0" opacity="0.15"/><polygon points="60.9,18.2 69.9,18.2 69.9,27.2" fill="#7a3ab0" opacity="0.07"/><polygon points="70.0,16.3 84.4,30.7 70.0,30.7" fill="#7a3ab0" opacity="0.19"/><polygon points="90.8,16.0 99.8,16.0 99.8,25.0" fill="#7a3ab0" opacity="0.16"/><polygon points="105.6,18.6 105.6,27.6 96.6,27.6" fill="#7a3ab0" opacity="0.14"/><polygon points="8.2,27.1 17.2,36.1 8.2,36.1" fill="#7a3ab0" opacity="0.11"/><polygon points="26.4,27.6 35.4,27.6 26.4,36.6" fill="#7a3ab0" opacity="0.08"/><polygon points="63.8,27.7 78.2,42.1 63.8,42.1" fill="#7a3ab0" opacity="0.19"/><polygon points="69.3,25.2 83.7,39.6 69.3,39.6" fill="#7a3ab0" opacity="0.22"/><polygon points="99.6,24.9 114.0,24.9 114.0,39.3" fill="#040a48" opacity="0.09"/><polygon points="-0.8,36.5 8.2,45.5 -0.8,45.5" fill="#7a3ab0" opacity="0.22"/><polygon points="8.2,34.1 22.6,34.1 22.6,48.5" fill="#040a48" opacity="0.24"/><polygon points="63.2,35.1 77.6,35.1 77.6,49.5" fill="#7a3ab0" opacity="0.09"/><polygon points="89.6,33.5 95.0,33.5 95.0,38.9" fill="#7a3ab0" opacity="0.18"/><polygon points="113.2,36.7 113.2,51.1 98.8,51.1" fill="#7a3ab0" opacity="0.15"/><polygon points="-0.4,42.4 14.0,42.4 14.0,56.8" fill="#7a3ab0" opacity="0.11"/><polygon points="18.7,43.5 18.7,52.5 9.7,52.5" fill="#7a3ab0" opacity="0.22"/><polygon points="17.3,45.3 22.7,45.3 22.7,50.7" fill="#7a3ab0" opacity="0.21"/><polygon points="35.4,44.5 49.8,58.9 35.4,58.9" fill="#7a3ab0" opacity="0.11"/><polygon points="53.4,43.1 62.4,52.1 53.4,52.1" fill="#040a48" opacity="0.16"/><polygon points="71.3,44.1 71.3,53.1 62.3,53.1" fill="#7a3ab0" opacity="0.25"/><polygon points="75.2,43.6 75.2,49.0 69.8,49.0" fill="#7a3ab0" opacity="0.09"/><polygon points="87.3,43.5 87.3,48.9 81.9,48.9" fill="#040a48" opacity="0.07"/><polygon points="97.2,42.7 97.2,51.7 88.2,51.7" fill="#7a3ab0" opacity="0.17"/><polygon points="107.2,43.5 112.6,48.9 107.2,48.9" fill="#7a3ab0" opacity="0.17"/><polygon points="8.5,52.6 8.5,61.6 -0.5,61.6" fill="#040a48" opacity="0.11"/><polygon points="18.1,51.6 23.5,57.0 18.1,57.0" fill="#040a48" opacity="0.19"/><polygon points="24.8,54.6 39.2,69.0 24.8,69.0" fill="#040a48" opacity="0.12"/><polygon points="35.2,51.9 49.6,51.9 35.2,66.3" fill="#7a3ab0" opacity="0.09"/><polygon points="42.6,53.5 48.0,53.5 48.0,58.9" fill="#7a3ab0" opacity="0.16"/><polygon points="54.7,54.9 63.7,54.9 54.7,63.9" fill="#040a48" opacity="0.11"/><polygon points="75.6,51.5 75.6,56.9 70.2,56.9" fill="#7a3ab0" opacity="0.13"/><polygon points="79.4,53.7 93.8,53.7 93.8,68.1" fill="#7a3ab0" opacity="0.12"/><polygon points="87.8,52.8 96.8,52.8 96.8,61.8" fill="#040a48" opacity="0.13"/><polygon points="108.2,54.6 117.2,63.6 108.2,63.6" fill="#040a48" opacity="0.21"/><polygon points="-2.6,60.8 6.4,60.8 6.4,69.8" fill="#7a3ab0" opacity="0.24"/><polygon points="15.7,61.1 24.7,70.1 15.7,70.1" fill="#040a48" opacity="0.09"/><polygon points="27.1,62.5 36.1,71.5 27.1,71.5" fill="#040a48" opacity="0.10"/><polygon points="34.2,60.7 43.2,69.7 34.2,69.7" fill="#7a3ab0" opacity="0.22"/><polygon points="62.7,62.7 71.7,71.7 62.7,71.7" fill="#040a48" opacity="0.14"/><polygon points="78.9,61.2 78.9,70.2 69.9,70.2" fill="#7a3ab0" opacity="0.11"/><polygon points="81.3,61.4 86.7,61.4 81.3,66.8" fill="#7a3ab0" opacity="0.11"/><polygon points="106.8,62.7 112.2,62.7 112.2,68.1" fill="#7a3ab0" opacity="0.21"/><polygon points="-1.6,69.6 7.4,78.6 -1.6,78.6" fill="#7a3ab0" opacity="0.10"/><polygon points="9.8,70.3 18.8,79.3 9.8,79.3" fill="#040a48" opacity="0.11"/><polygon points="25.4,72.2 34.4,72.2 25.4,81.2" fill="#7a3ab0" opacity="0.17"/><polygon points="33.7,71.1 48.1,71.1 33.7,85.5" fill="#7a3ab0" opacity="0.14"/><polygon points="54.9,69.5 54.9,78.5 45.9,78.5" fill="#040a48" opacity="0.11"/><polygon points="53.9,72.8 68.3,87.2 53.9,87.2" fill="#040a48" opacity="0.13"/><polygon points="72.0,72.8 86.4,72.8 72.0,87.2" fill="#040a48" opacity="0.12"/><polygon points="89.1,72.9 89.1,81.9 80.1,81.9" fill="#040a48" opacity="0.17"/><polygon points="89.0,71.6 103.4,71.6 89.0,86.0" fill="#7a3ab0" opacity="0.20"/><polygon points="96.7,70.4 102.1,75.8 96.7,75.8" fill="#040a48" opacity="0.09"/><polygon points="8.4,80.4 13.8,85.8 8.4,85.8" fill="#7a3ab0" opacity="0.20"/><polygon points="17.1,78.7 31.5,78.7 31.5,93.1" fill="#040a48" opacity="0.12"/><polygon points="27.8,80.9 42.2,80.9 27.8,95.3" fill="#040a48" opacity="0.20"/><polygon points="42.3,79.2 47.7,84.6 42.3,84.6" fill="#7a3ab0" opacity="0.16"/><polygon points="69.5,78.6 83.9,78.6 69.5,93.0" fill="#7a3ab0" opacity="0.14"/><polygon points="98.1,80.4 98.1,89.4 89.1,89.4" fill="#7a3ab0" opacity="0.21"/><polygon points="108.8,81.0 117.8,90.0 108.8,90.0" fill="#7a3ab0" opacity="0.23"/></g><rect x="37.400000000000034" y="13.0" width="55.8" height="43.2" rx="4" fill="#000" opacity="0.300" filter="url(#sh2)"/><rect x="38.400000000000034" y="12.0" width="53.8" height="41.2" rx="3" fill="#242424"/><path d="M38.400000000000034,21.0 V15.0 a3,3 0 0 1 3,-3 H89.20000000000003 a3,3 0 0 1 3,3 V21.0Z" fill="#2c2c2c"/><rect x="38.400000000000034" y="20.7" width="53.8" height="0.600" fill="#484848"/><rect x="14.800000000000011" y="29.599999999999994" width="56.4" height="43.3" rx="4" fill="#000" opacity="0.300" filter="url(#sh2)"/><rect x="15.800000000000011" y="28.599999999999994" width="54.4" height="41.3" rx="3" fill="#242424"/><path d="M15.800000000000011,37.599999999999994 V31.599999999999994 a3,3 0 0 1 3,-3 H67.20000000000002 a3,3 0 0 1 3,3 V37.599999999999994Z" fill="#303030"/><rect x="15.800000000000011" y="37.3" width="54.4" height="0.600" fill="#505050"/></svg></div>
<span class="t" style="left:145.3px;top:142.80px;transform:scaleX(0.950);">Light</span>
<span class="t" style="left:275.3px;top:142.80px;transform:scaleX(0.930);">Dark</span>
<span class="t b" style="left:44.4px;top:184.30px;transform:scaleX(0.908)">Background</span>
<svg style="position:absolute;left:317.0px;top:184.9px;width:9px;height:9px" viewBox="0 0 9 9"><path d="M4.500 0.400V8.600M0.400 4.500H8.600" stroke="#2e2e2e" stroke-width="1.300" stroke-linecap="round"/></svg>
<span class="t b" style="left:330.2px;top:184.30px;transform:scaleX(0.902);">Add Picture…</span>
<div class="card" style="left:44.8px;top:204.3px;width:352.7px;height:400px"></div>
<div class="thumb" style="left:60.4px;top:213.8px;width:99.5px;height:74.3px"><svg width="99.5" height="74.3" viewBox="0 0 100 74" preserveAspectRatio="none"><defs><linearGradient id="t1a" x1="0" y1="0" x2="0.35" y2="1"><stop offset="0" stop-color="#a9dfe8"/><stop offset="0.55" stop-color="#74cde2"/><stop offset="1" stop-color="#3aa2dc"/></linearGradient>
<linearGradient id="t1b" x1="0" y1="0" x2="1" y2="1"><stop offset="0" stop-color="#3f2a90"/><stop offset="0.35" stop-color="#1d2b8a"/><stop offset="0.7" stop-color="#1438a6"/><stop offset="1" stop-color="#1b58cc"/></linearGradient></defs>
<rect width="100" height="74" fill="url(#t1b)"/><polygon points="0,0 2,0 100,72 100,74 0,74" fill="url(#t1a)"/>
<g opacity="0.5"><polygon points="8,0 30,0 52,16 30,16" fill="#2a2480" opacity="0.7"/><polygon points="45,0 70,0 70,18" fill="#16267c" opacity="0.8"/><polygon points="70,22 80,22 80,34" fill="#5a2a90"/><polygon points="78,36 90,28 90,44" fill="#2a3cb0"/><polygon points="86,44 94,40 94,52" fill="#5b2c96"/><polygon points="75,48 84,56 75,56" fill="#4a2c98"/><polygon points="80,0 92,0 92,8" fill="#4a2488" opacity="0.8"/><polygon points="28,4 38,12 28,12" fill="#4c2a8c" opacity="0.7"/><polygon points="90,10 100,20 100,10" fill="#102c8c"/></g>
<g opacity="0.5"><polygon points="8,12 20,24 8,30" fill="#c4ecec" opacity="0.8"/><polygon points="22,26 34,26 34,40" fill="#a8deb6" opacity="0.9"/><polygon points="14,34 24,44 14,44" fill="#8ed8d8"/><polygon points="36,40 50,40 50,52" fill="#4cc4e8"/><polygon points="2,40 10,48 2,56" fill="#58b8dc"/><polygon points="42,54 54,64 42,64" fill="#2c94da"/><polygon points="8,58 20,70 8,70" fill="#3a9cdc"/><polygon points="56,58 66,58 66,70" fill="#62c8e8"/><polygon points="24,52 34,62 24,62" fill="#90dcec" opacity="0.8"/><polygon points="70,62 80,74 70,74" fill="#48b4e4"/></g>
<defs><clipPath id="c1a"><polygon points="0,0 100,74 0,74"/></clipPath><clipPath id="c1b"><polygon points="0,0 100,0 100,74"/></clipPath></defs><g clip-path="url(#c1a)"><polygon points="-0.9,-0.6 4.5,-0.6 4.5,4.8" fill="#e8fbff" opacity="0.20"/><polygon points="25.9,-2.2 25.9,6.8 16.9,6.8" fill="#e8fbff" opacity="0.16"/><polygon points="26.7,-0.5 32.1,-0.5 32.1,4.9" fill="#e8fbff" opacity="0.16"/><polygon points="63.1,-1.5 63.1,7.5 54.1,7.5" fill="#e8fbff" opacity="0.07"/><polygon points="60.3,-2.4 65.7,3.0 60.3,3.0" fill="#e8fbff" opacity="0.14"/><polygon points="70.4,-1.9 84.8,-1.9 70.4,12.5" fill="#1f7fd0" opacity="0.22"/><polygon points="96.5,-2.6 101.9,2.8 96.5,2.8" fill="#1f7fd0" opacity="0.08"/><polygon points="-1.3,8.9 4.1,8.9 -1.3,14.3" fill="#e8fbff" opacity="0.09"/><polygon points="6.6,7.5 21.0,21.9 6.6,21.9" fill="#e8fbff" opacity="0.16"/><polygon points="15.5,9.2 24.5,9.2 15.5,18.2" fill="#e8fbff" opacity="0.08"/><polygon points="41.0,6.7 41.0,12.1 35.6,12.1" fill="#1f7fd0" opacity="0.14"/><polygon points="43.1,7.7 52.1,16.7 43.1,16.7" fill="#e8fbff" opacity="0.06"/><polygon points="52.1,7.2 61.1,7.2 52.1,16.2" fill="#e8fbff" opacity="0.15"/><polygon points="60.6,7.1 69.6,7.1 69.6,16.1" fill="#1f7fd0" opacity="0.19"/><polygon points="69.8,8.4 75.2,13.8 69.8,13.8" fill="#e8fbff" opacity="0.16"/><polygon points="88.4,7.1 88.4,16.1 79.4,16.1" fill="#e8fbff" opacity="0.20"/><polygon points="95.9,8.5 95.9,13.9 90.5,13.9" fill="#e8fbff" opacity="0.09"/><polygon points="99.0,7.7 108.0,16.7 99.0,16.7" fill="#e8fbff" opacity="0.08"/><polygon points="6.8,17.0 6.8,26.0 -2.2,26.0" fill="#e8fbff" opacity="0.14"/><polygon points="9.6,16.0 18.6,25.0 9.6,25.0" fill="#e8fbff" opacity="0.16"/><polygon points="35.2,18.8 49.6,33.2 35.2,33.2" fill="#e8fbff" opacity="0.07"/><polygon points="72.6,17.0 72.6,26.0 63.6,26.0" fill="#1f7fd0" opacity="0.17"/><polygon points="71.0,17.9 80.0,17.9 71.0,26.9" fill="#1f7fd0" opacity="0.21"/><polygon points="90.5,18.0 99.5,27.0 90.5,27.0" fill="#e8fbff" opacity="0.13"/><polygon points="99.4,16.8 108.4,16.8 108.4,25.8" fill="#1f7fd0" opacity="0.12"/><polygon points="-0.6,26.5 4.8,26.5 4.8,31.9" fill="#1f7fd0" opacity="0.15"/><polygon points="18.7,26.8 24.1,32.2 18.7,32.2" fill="#1f7fd0" opacity="0.20"/><polygon points="25.4,24.6 34.4,24.6 25.4,33.6" fill="#1f7fd0" opacity="0.19"/><polygon points="45.5,25.6 59.9,25.6 59.9,40.0" fill="#e8fbff" opacity="0.14"/><polygon points="62.1,25.2 67.5,30.6 62.1,30.6" fill="#e8fbff" opacity="0.09"/><polygon points="72.5,25.7 81.5,25.7 81.5,34.7" fill="#1f7fd0" opacity="0.09"/><polygon points="85.0,27.5 85.0,32.9 79.6,32.9" fill="#1f7fd0" opacity="0.09"/><polygon points="0.6,36.3 15.0,36.3 15.0,50.7" fill="#e8fbff" opacity="0.08"/><polygon points="7.5,36.3 12.9,41.7 7.5,41.7" fill="#e8fbff" opacity="0.14"/><polygon points="26.6,35.3 41.0,49.7 26.6,49.7" fill="#e8fbff" opacity="0.17"/><polygon points="34.2,33.8 48.6,33.8 34.2,48.2" fill="#1f7fd0" opacity="0.13"/><polygon points="53.8,34.0 62.8,43.0 53.8,43.0" fill="#1f7fd0" opacity="0.08"/><polygon points="60.9,34.3 69.9,34.3 69.9,43.3" fill="#e8fbff" opacity="0.17"/><polygon points="86.8,35.8 86.8,41.2 81.4,41.2" fill="#e8fbff" opacity="0.14"/><polygon points="97.0,36.5 102.4,36.5 102.4,41.9" fill="#e8fbff" opacity="0.12"/><polygon points="7.5,45.8 12.9,51.2 7.5,51.2" fill="#e8fbff" opacity="0.20"/><polygon points="25.2,43.7 34.2,43.7 25.2,52.7" fill="#e8fbff" opacity="0.21"/><polygon points="53.1,42.4 67.5,42.4 53.1,56.8" fill="#1f7fd0" opacity="0.10"/><polygon points="72.2,42.5 81.2,42.5 72.2,51.5" fill="#1f7fd0" opacity="0.14"/><polygon points="84.2,44.2 84.2,49.6 78.8,49.6" fill="#e8fbff" opacity="0.15"/><polygon points="90.0,43.9 99.0,43.9 99.0,52.9" fill="#e8fbff" opacity="0.17"/><polygon points="111.8,43.7 111.8,58.1 97.4,58.1" fill="#e8fbff" opacity="0.15"/><polygon points="13.8,52.0 13.8,66.4 -0.6,66.4" fill="#e8fbff" opacity="0.09"/><polygon points="8.2,51.5 17.2,51.5 17.2,60.5" fill="#e8fbff" opacity="0.06"/><polygon points="15.6,51.9 21.0,51.9 15.6,57.3" fill="#e8fbff" opacity="0.19"/><polygon points="25.2,53.1 39.6,53.1 39.6,67.5" fill="#1f7fd0" opacity="0.13"/><polygon points="43.8,51.4 52.8,51.4 43.8,60.4" fill="#1f7fd0" opacity="0.14"/><polygon points="69.3,52.3 69.3,61.3 60.3,61.3" fill="#e8fbff" opacity="0.07"/><polygon points="71.9,51.7 77.3,51.7 71.9,57.1" fill="#e8fbff" opacity="0.16"/><polygon points="79.7,52.8 88.7,52.8 88.7,61.8" fill="#1f7fd0" opacity="0.17"/><polygon points="99.4,53.5 99.4,62.5 90.4,62.5" fill="#e8fbff" opacity="0.15"/><polygon points="97.4,52.4 106.4,61.4 97.4,61.4" fill="#e8fbff" opacity="0.21"/><polygon points="6.8,61.2 6.8,70.2 -2.2,70.2" fill="#e8fbff" opacity="0.18"/><polygon points="8.3,62.8 13.7,62.8 13.7,68.2" fill="#1f7fd0" opacity="0.12"/><polygon points="24.7,62.1 39.1,76.5 24.7,76.5" fill="#e8fbff" opacity="0.08"/><polygon points="44.0,60.4 44.0,69.4 35.0,69.4" fill="#e8fbff" opacity="0.22"/><polygon points="43.0,60.7 52.0,60.7 52.0,69.7" fill="#e8fbff" opacity="0.14"/><polygon points="81.1,61.5 90.1,61.5 90.1,70.5" fill="#e8fbff" opacity="0.07"/><polygon points="101.7,62.8 101.7,77.2 87.3,77.2" fill="#e8fbff" opacity="0.12"/><polygon points="97.8,61.0 112.2,75.4 97.8,75.4" fill="#e8fbff" opacity="0.13"/><polygon points="8.4,70.0 13.8,70.0 8.4,75.4" fill="#e8fbff" opacity="0.11"/><polygon points="18.6,72.0 33.0,86.4 18.6,86.4" fill="#1f7fd0" opacity="0.19"/><polygon points="27.1,72.1 41.5,86.5 27.1,86.5" fill="#1f7fd0" opacity="0.08"/><polygon points="35.0,69.3 49.4,83.7 35.0,83.7" fill="#e8fbff" opacity="0.09"/><polygon points="43.3,72.8 52.3,72.8 43.3,81.8" fill="#e8fbff" opacity="0.20"/><polygon points="71.6,71.8 77.0,71.8 77.0,77.2" fill="#e8fbff" opacity="0.15"/><polygon points="79.2,70.7 88.2,70.7 79.2,79.7" fill="#e8fbff" opacity="0.06"/></g><g clip-path="url(#c1b)"><polygon points="-1.3,0.9 7.7,9.9 -1.3,9.9" fill="#6a3ab0" opacity="0.19"/><polygon points="17.7,-2.2 17.7,6.8 8.7,6.8" fill="#6a3ab0" opacity="0.24"/><polygon points="26.4,-2.0 26.4,7.0 17.4,7.0" fill="#6a3ab0" opacity="0.15"/><polygon points="27.6,0.3 36.6,0.3 27.6,9.3" fill="#050c50" opacity="0.22"/><polygon points="33.7,-1.2 39.1,-1.2 39.1,4.2" fill="#6a3ab0" opacity="0.10"/><polygon points="62.1,-2.4 71.1,-2.4 62.1,6.6" fill="#6a3ab0" opacity="0.28"/><polygon points="71.2,-0.4 76.6,-0.4 76.6,5.0" fill="#6a3ab0" opacity="0.20"/><polygon points="98.7,-2.3 104.1,3.1 98.7,3.1" fill="#050c50" opacity="0.15"/><polygon points="16.7,9.4 16.7,18.4 7.7,18.4" fill="#6a3ab0" opacity="0.19"/><polygon points="33.9,8.8 42.9,8.8 33.9,17.8" fill="#6a3ab0" opacity="0.16"/><polygon points="70.5,7.9 79.5,16.9 70.5,16.9" fill="#6a3ab0" opacity="0.18"/><polygon points="87.0,7.6 87.0,13.0 81.6,13.0" fill="#050c50" opacity="0.13"/><polygon points="96.9,9.2 111.3,23.6 96.9,23.6" fill="#6a3ab0" opacity="0.08"/><polygon points="-2.6,16.5 6.4,25.5 -2.6,25.5" fill="#6a3ab0" opacity="0.20"/><polygon points="13.5,16.6 13.5,22.0 8.1,22.0" fill="#050c50" opacity="0.21"/><polygon points="21.7,18.4 21.7,23.8 16.3,23.8" fill="#050c50" opacity="0.26"/><polygon points="35.9,17.2 44.9,17.2 44.9,26.2" fill="#6a3ab0" opacity="0.21"/><polygon points="79.9,18.8 79.9,27.8 70.9,27.8" fill="#050c50" opacity="0.16"/><polygon points="79.8,17.4 88.8,26.4 79.8,26.4" fill="#6a3ab0" opacity="0.22"/><polygon points="89.6,16.7 104.0,31.1 89.6,31.1" fill="#6a3ab0" opacity="0.20"/><polygon points="0.6,26.2 9.6,26.2 0.6,35.2" fill="#6a3ab0" opacity="0.26"/><polygon points="7.4,27.7 16.4,36.7 7.4,36.7" fill="#050c50" opacity="0.24"/><polygon points="17.2,26.8 26.2,26.8 17.2,35.8" fill="#6a3ab0" opacity="0.18"/><polygon points="24.6,25.5 39.0,39.9 24.6,39.9" fill="#6a3ab0" opacity="0.09"/><polygon points="40.0,24.4 40.0,29.8 34.6,29.8" fill="#6a3ab0" opacity="0.14"/><polygon points="43.9,27.5 58.3,27.5 43.9,41.9" fill="#050c50" opacity="0.18"/><polygon points="75.8,26.2 75.8,31.6 70.4,31.6" fill="#050c50" opacity="0.14"/><polygon points="89.5,27.3 94.9,27.3 94.9,32.7" fill="#050c50" opacity="0.11"/><polygon points="4.6,36.0 4.6,41.4 -0.8,41.4" fill="#6a3ab0" opacity="0.25"/><polygon points="8.3,35.8 17.3,35.8 8.3,44.8" fill="#6a3ab0" opacity="0.17"/><polygon points="17.6,33.9 32.0,33.9 32.0,48.3" fill="#6a3ab0" opacity="0.08"/><polygon points="25.8,34.6 34.8,34.6 34.8,43.6" fill="#6a3ab0" opacity="0.11"/><polygon points="33.8,34.2 48.2,34.2 48.2,48.6" fill="#6a3ab0" opacity="0.20"/><polygon points="52.8,34.7 67.2,49.1 52.8,49.1" fill="#050c50" opacity="0.16"/><polygon points="72.1,36.3 72.1,45.3 63.1,45.3" fill="#050c50" opacity="0.24"/><polygon points="90.1,36.4 104.5,50.8 90.1,50.8" fill="#6a3ab0" opacity="0.25"/><polygon points="-2.5,45.2 11.9,45.2 -2.5,59.6" fill="#6a3ab0" opacity="0.26"/><polygon points="26.5,42.7 35.5,51.7 26.5,51.7" fill="#6a3ab0" opacity="0.28"/><polygon points="35.6,45.2 44.6,45.2 35.6,54.2" fill="#6a3ab0" opacity="0.12"/><polygon points="45.4,45.5 50.8,50.9 45.4,50.9" fill="#6a3ab0" opacity="0.14"/><polygon points="62.8,45.7 77.2,45.7 77.2,60.1" fill="#6a3ab0" opacity="0.26"/><polygon points="72.3,42.8 81.3,51.8 72.3,51.8" fill="#050c50" opacity="0.19"/><polygon points="35.4,54.2 44.4,54.2 35.4,63.2" fill="#6a3ab0" opacity="0.26"/><polygon points="45.2,52.7 59.6,52.7 59.6,67.1" fill="#050c50" opacity="0.23"/><polygon points="52.4,54.6 61.4,63.6 52.4,63.6" fill="#050c50" opacity="0.27"/><polygon points="69.7,52.9 69.7,61.9 60.7,61.9" fill="#6a3ab0" opacity="0.14"/><polygon points="79.5,54.5 84.9,54.5 84.9,59.9" fill="#050c50" opacity="0.15"/><polygon points="103.1,53.5 103.1,67.9 88.7,67.9" fill="#6a3ab0" opacity="0.15"/><polygon points="-1.2,60.7 13.2,75.1 -1.2,75.1" fill="#050c50" opacity="0.23"/><polygon points="8.4,62.4 17.4,71.4 8.4,71.4" fill="#6a3ab0" opacity="0.18"/><polygon points="15.6,62.5 21.0,67.9 15.6,67.9" fill="#050c50" opacity="0.15"/><polygon points="25.4,61.5 34.4,70.5 25.4,70.5" fill="#050c50" opacity="0.20"/><polygon points="36.3,62.2 45.3,71.2 36.3,71.2" fill="#050c50" opacity="0.09"/><polygon points="42.9,61.9 57.3,61.9 42.9,76.3" fill="#6a3ab0" opacity="0.24"/><polygon points="62.6,62.4 71.6,71.4 62.6,71.4" fill="#6a3ab0" opacity="0.12"/><polygon points="70.9,61.7 76.3,61.7 76.3,67.1" fill="#050c50" opacity="0.17"/><polygon points="88.6,61.4 103.0,61.4 103.0,75.8" fill="#6a3ab0" opacity="0.13"/><polygon points="-2.2,72.3 3.2,77.7 -2.2,77.7" fill="#050c50" opacity="0.16"/><polygon points="9.3,69.8 14.7,69.8 14.7,75.2" fill="#050c50" opacity="0.12"/><polygon points="24.7,72.3 24.7,81.3 15.7,81.3" fill="#6a3ab0" opacity="0.14"/><polygon points="24.8,70.1 33.8,70.1 24.8,79.1" fill="#050c50" opacity="0.14"/><polygon points="33.8,70.0 42.8,79.0 33.8,79.0" fill="#050c50" opacity="0.27"/><polygon points="44.2,72.6 53.2,81.6 44.2,81.6" fill="#6a3ab0" opacity="0.24"/><polygon points="61.4,72.9 66.8,72.9 61.4,78.3" fill="#6a3ab0" opacity="0.27"/><polygon points="71.3,72.3 76.7,72.3 76.7,77.7" fill="#050c50" opacity="0.10"/><polygon points="81.9,70.1 96.3,70.1 81.9,84.5" fill="#6a3ab0" opacity="0.08"/><polygon points="90.4,71.6 99.4,71.6 90.4,80.6" fill="#6a3ab0" opacity="0.23"/><polygon points="96.7,72.2 105.7,72.2 96.7,81.2" fill="#050c50" opacity="0.15"/></g><circle cx="89.6" cy="63.8" r="6.600" fill="#3584e4"/><path d="M86.300 63.900 88.600 66.200 93 61.700" fill="none" stroke="#fff" stroke-width="1.800" stroke-linecap="round" stroke-linejoin="round"/></svg></div>
<div class="thumb" style="left:171.2px;top:213.8px;width:99.5px;height:74.3px"><svg width="99.5" height="74.3" viewBox="0 0 100 74" preserveAspectRatio="none"><rect width="100" height="74" fill="#120d1b"/><path d="M100.0,0.0 L41.6,-2.2 L41.0,-1.0 L40.4,0.0 L40.1,1.0 L40.0,2.3 L40.2,3.8 L40.8,5.5 L41.6,7.1 L42.5,8.9 L43.5,10.6 L44.5,12.4 L45.3,14.3 L45.9,16.3 L46.4,18.3 L46.9,20.5 L47.3,22.7 L47.9,25.0 L48.7,27.2 L49.7,29.4 L51.0,31.4 L52.6,33.3 L54.3,35.0 L56.0,36.7 L57.8,38.3 L59.5,39.9 L61.0,41.7 L62.4,43.6 L63.8,45.7 L65.1,47.8 L66.4,50.0 L67.8,52.0 L69.4,53.9 L71.1,55.5 L73.0,56.8 L74.9,57.8 L76.9,58.6 L78.9,59.3 L80.8,60.0 L82.6,60.8 L84.3,61.8 L86.0,62.9 L87.5,64.2 L89.1,65.6 L90.7,66.8 L92.2,67.9 L93.8,68.7 L95.3,69.1 L96.7,69.2 L98.0,68.9 L99.2,68.4 L100.0,67.8 L100.8,67.3 L101.9,66.9Z" fill="#1c0f24"/><path d="M100.0,0.0 L52.2,-2.0 L51.7,-0.9 L51.4,0.0 L51.5,0.9 L51.8,2.0 L52.3,3.4 L53.0,4.8 L53.8,6.2 L54.5,7.7 L55.1,9.3 L55.5,10.9 L55.8,12.7 L56.0,14.5 L56.2,16.5 L56.5,18.4 L56.9,20.4 L57.6,22.4 L58.5,24.2 L59.7,25.9 L61.0,27.5 L62.4,29.0 L63.8,30.4 L65.1,31.9 L66.4,33.5 L67.5,35.2 L68.4,37.1 L69.4,39.1 L70.3,41.1 L71.4,43.0 L72.6,44.8 L73.9,46.4 L75.3,47.7 L76.9,48.8 L78.5,49.6 L80.1,50.3 L81.7,51.0 L83.2,51.8 L84.6,52.7 L86.0,53.8 L87.3,55.1 L88.5,56.4 L89.8,57.8 L91.1,59.0 L92.4,59.9 L93.7,60.5 L95.0,60.7 L96.2,60.7 L97.4,60.3 L98.4,59.9 L99.4,59.5 L100.0,59.3 L100.6,59.2 L101.5,59.3Z" fill="#28112c"/><path d="M100.0,0.0 L63.2,-1.7 L63.0,-0.7 L63.1,0.0 L63.5,0.7 L64.0,1.6 L64.5,2.7 L65.1,3.8 L65.5,5.0 L65.8,6.2 L66.0,7.6 L66.0,9.0 L66.0,10.5 L66.0,12.1 L66.2,13.7 L66.5,15.3 L67.1,16.8 L67.9,18.3 L68.9,19.6 L69.9,20.8 L71.0,22.0 L72.1,23.2 L73.0,24.5 L73.8,25.9 L74.5,27.4 L75.1,29.1 L75.7,30.8 L76.3,32.6 L77.1,34.2 L78.0,35.6 L79.1,36.8 L80.3,37.8 L81.5,38.5 L82.8,39.2 L84.1,39.7 L85.2,40.3 L86.3,41.1 L87.4,42.1 L88.3,43.2 L89.2,44.5 L90.2,45.8 L91.1,47.0 L92.1,48.0 L93.2,48.7 L94.2,49.1 L95.3,49.1 L96.3,48.9 L97.2,48.6 L98.1,48.3 L98.8,48.1 L99.5,48.1 L100.0,48.3 L100.5,48.7 L101.2,49.2Z" fill="#3c112c"/><path d="M100.0,0.0 L74.8,-1.3 L75.0,-0.5 L75.3,0.0 L75.6,0.5 L75.9,1.2 L76.3,2.0 L76.6,2.8 L76.8,3.7 L77.0,4.6 L77.1,5.6 L77.2,6.7 L77.2,7.8 L77.2,8.9 L77.3,10.1 L77.4,11.4 L77.6,12.6 L77.9,13.8 L78.3,15.0 L78.8,16.1 L79.4,17.2 L80.1,18.1 L80.9,19.0 L81.7,19.9 L82.5,20.7 L83.3,21.5 L84.0,22.3 L84.7,23.1 L85.3,24.0 L85.9,25.0 L86.5,26.1 L87.1,27.2 L87.6,28.4 L88.2,29.5 L88.8,30.7 L89.4,31.8 L90.1,32.7 L90.8,33.5 L91.6,34.1 L92.4,34.6 L93.2,34.9 L94.0,35.0 L94.8,35.1 L95.5,35.1 L96.2,35.0 L96.9,35.0 L97.6,35.1 L98.2,35.2 L98.7,35.5 L99.2,35.8 L99.7,36.2 L100.0,36.7 L100.3,37.1 L100.8,37.5Z" fill="#5c0f28"/><path d="M100.0,0.0 L86.6,-0.7 L86.7,-0.3 L86.8,0.0 L86.9,0.3 L87.0,0.7 L87.1,1.2 L87.2,1.7 L87.3,2.2 L87.4,2.8 L87.5,3.4 L87.6,4.0 L87.6,4.7 L87.7,5.3 L87.8,6.0 L87.9,6.7 L88.0,7.5 L88.1,8.2 L88.3,9.0 L88.5,9.7 L88.7,10.5 L88.9,11.2 L89.2,12.0 L89.5,12.7 L89.8,13.4 L90.1,14.0 L90.5,14.6 L90.9,15.2 L91.3,15.7 L91.8,16.2 L92.2,16.7 L92.7,17.1 L93.1,17.5 L93.6,17.8 L94.0,18.1 L94.5,18.4 L94.9,18.7 L95.3,19.0 L95.7,19.3 L96.1,19.6 L96.5,19.9 L96.9,20.2 L97.2,20.5 L97.6,20.8 L98.0,21.2 L98.3,21.5 L98.6,21.8 L99.0,22.1 L99.3,22.4 L99.6,22.7 L99.8,22.9 L100.0,23.1 L100.2,23.3 L100.5,23.4Z" fill="#8e1220"/><polygon points="0,0 100,74 0,74" fill="#2d3062"/><defs><clipPath id="c2"><polygon points="0,0 100,74 0,74"/></clipPath></defs><g clip-path="url(#c2)"><path d="M0.0,74.0 L58.0,76.1 L58.7,74.9 L59.3,74.0 L59.8,73.1 L60.0,71.9 L59.8,70.5 L59.4,68.9 L58.6,67.4 L57.6,65.8 L56.5,64.2 L55.5,62.5 L54.6,60.8 L53.8,59.0 L53.2,57.2 L52.8,55.2 L52.4,53.1 L51.9,51.0 L51.2,48.9 L50.3,46.9 L49.0,44.9 L47.6,43.2 L45.9,41.5 L44.1,40.0 L42.2,38.6 L40.5,37.1 L38.9,35.6 L37.4,33.9 L36.0,32.1 L34.7,30.1 L33.4,28.1 L32.0,26.1 L30.5,24.3 L28.9,22.7 L27.1,21.4 L25.1,20.4 L23.2,19.6 L21.2,19.0 L19.2,18.5 L17.4,17.9 L15.6,17.1 L14.0,16.2 L12.4,15.0 L10.8,13.8 L9.3,12.5 L7.7,11.4 L6.2,10.6 L4.7,10.1 L3.3,10.0 L2.0,10.2 L0.8,10.6 L0.0,11.2 L-0.8,11.8 L-1.9,12.3Z" fill="#3b3576"/><path d="M0.0,74.0 L47.1,75.7 L47.7,74.7 L48.1,74.0 L48.2,73.3 L48.0,72.2 L47.5,71.1 L46.8,69.9 L45.9,68.6 L45.1,67.3 L44.3,66.0 L43.8,64.6 L43.4,63.1 L43.2,61.6 L43.1,59.9 L42.9,58.2 L42.6,56.4 L42.1,54.7 L41.2,53.1 L40.1,51.6 L38.8,50.2 L37.4,48.9 L35.9,47.7 L34.5,46.5 L33.2,45.2 L32.0,43.8 L31.0,42.3 L30.1,40.6 L29.2,38.8 L28.2,37.0 L27.2,35.4 L25.9,33.9 L24.5,32.7 L23.0,31.7 L21.4,31.0 L19.7,30.5 L18.1,30.0 L16.6,29.4 L15.1,28.8 L13.8,27.9 L12.5,26.9 L11.3,25.7 L10.0,24.4 L8.8,23.3 L7.5,22.3 L6.3,21.7 L5.0,21.4 L3.8,21.4 L2.6,21.7 L1.5,22.2 L0.6,22.7 L0.0,23.0 L-0.6,23.2 L-1.5,23.2Z" fill="#5f3a92"/><path d="M0.0,74.0 L36.8,75.5 L37.0,74.6 L37.0,74.0 L36.7,73.4 L36.2,72.6 L35.5,71.7 L34.9,70.7 L34.3,69.7 L33.9,68.6 L33.7,67.5 L33.6,66.3 L33.7,65.0 L33.8,63.6 L33.7,62.2 L33.5,60.8 L33.0,59.4 L32.3,58.1 L31.3,57.0 L30.2,55.9 L29.0,54.9 L27.9,54.0 L26.9,52.9 L26.0,51.8 L25.3,50.5 L24.7,49.1 L24.1,47.6 L23.5,46.0 L22.8,44.5 L22.0,43.2 L21.0,42.0 L19.8,41.2 L18.6,40.5 L17.3,40.0 L16.0,39.6 L14.7,39.2 L13.6,38.7 L12.5,37.9 L11.6,37.0 L10.6,35.9 L9.7,34.7 L8.8,33.5 L7.8,32.5 L6.8,31.8 L5.8,31.4 L4.8,31.3 L3.8,31.5 L2.8,31.8 L1.9,32.3 L1.2,32.6 L0.5,32.7 L0.0,32.6 L-0.5,32.3 L-1.2,31.9Z" fill="#8a3398"/><path d="M0.0,74.0 L24.9,75.1 L24.7,74.5 L24.4,74.0 L24.1,73.5 L23.7,72.9 L23.3,72.3 L23.0,71.5 L22.7,70.8 L22.4,70.0 L22.3,69.1 L22.2,68.2 L22.1,67.3 L22.1,66.3 L22.1,65.2 L22.1,64.1 L21.9,63.0 L21.7,61.9 L21.4,60.8 L20.9,59.8 L20.3,58.8 L19.7,58.0 L18.9,57.2 L18.1,56.4 L17.3,55.8 L16.5,55.1 L15.7,54.5 L15.0,53.8 L14.3,53.1 L13.7,52.3 L13.1,51.4 L12.5,50.4 L12.0,49.4 L11.5,48.3 L10.9,47.3 L10.3,46.3 L9.7,45.3 L9.0,44.6 L8.3,43.9 L7.5,43.5 L6.7,43.2 L5.9,43.0 L5.2,43.0 L4.4,43.1 L3.7,43.2 L3.0,43.3 L2.4,43.3 L1.8,43.3 L1.3,43.2 L0.8,42.9 L0.3,42.6 L0.0,42.2 L-0.3,41.8 L-0.8,41.4Z" fill="#aa2e8c"/><path d="M0.0,74.0 L10.6,74.4 L10.5,74.2 L10.4,74.0 L10.2,73.8 L10.1,73.6 L10.0,73.3 L9.8,73.0 L9.7,72.7 L9.7,72.4 L9.6,72.0 L9.5,71.7 L9.5,71.3 L9.4,70.9 L9.4,70.5 L9.3,70.1 L9.3,69.6 L9.2,69.2 L9.2,68.7 L9.1,68.2 L8.9,67.8 L8.8,67.3 L8.6,66.8 L8.4,66.4 L8.2,65.9 L7.9,65.5 L7.6,65.1 L7.3,64.8 L7.0,64.4 L6.6,64.2 L6.2,63.9 L5.9,63.7 L5.5,63.5 L5.1,63.3 L4.7,63.2 L4.4,63.1 L4.0,63.0 L3.6,62.8 L3.3,62.7 L3.0,62.6 L2.7,62.5 L2.4,62.3 L2.1,62.2 L1.8,62.0 L1.6,61.8 L1.3,61.6 L1.1,61.3 L0.8,61.1 L0.6,60.9 L0.3,60.7 L0.1,60.5 L0.0,60.3 L-0.2,60.1 L-0.4,60.0Z" fill="#c2365e"/></g></svg></div>
<div class="thumb" style="left:282.0px;top:213.8px;width:99.5px;height:74.3px"><svg width="99.5" height="74.3" viewBox="0 0 100 74" preserveAspectRatio="none"><defs><linearGradient id="t3a" x1="0" y1="0" x2="0" y2="1"><stop offset="0" stop-color="#c8a04c"/><stop offset="0.4" stop-color="#c4783c"/><stop offset="0.75" stop-color="#be6c38"/><stop offset="1" stop-color="#c47030"/></linearGradient>
<linearGradient id="t3b" x1="0" y1="0" x2="1" y2="0.600"><stop offset="0" stop-color="#21453a"/><stop offset="0.5" stop-color="#173a34"/><stop offset="1" stop-color="#0a1a20"/></linearGradient>
<linearGradient id="t3c" x1="0.200" y1="0.800" x2="0.650" y2="0.200"><stop offset="0.250" stop-color="#c9a450" stop-opacity="0"/><stop offset="0.600" stop-color="#c9a450" stop-opacity="0.850"/></linearGradient>
<linearGradient id="t3d" x1="0" y1="0" x2="1" y2="0"><stop offset="0.550" stop-color="#d27a1e" stop-opacity="0"/><stop offset="1" stop-color="#d47c1c" stop-opacity="0.900"/></linearGradient></defs>
<rect width="100" height="74" fill="url(#t3b)"/><polygon points="0,0 100,74 0,74" fill="url(#t3a)"/><polygon points="0,0 100,74 0,74" fill="url(#t3c)"/><polygon points="40,55 100,74 40,74" fill="url(#t3d)"/></svg></div>
<div class="thumb" style="left:60.4px;top:299.3px;width:99.5px;height:74.3px"><svg width="99.5" height="74.3" viewBox="0 0 100 74" preserveAspectRatio="none"><rect width="100" height="74" fill="#732d28"/><polygon points="0,0 12,0 12,1.500 2,1.500" fill="#0c1230"/>
<path d="M15,6.500 H118 L87.500,62 C86.500,63.500 85,63.500 84,62.500 L13,9 C11.500,7.500 13,6.500 15,6.500Z" fill="#c4490a"/>
<path d="M37,11 L98,27 C100,27.500 100.500,29 99.500,30.500 L78,56 C77,57.200 75.500,57.200 74.500,56 L35,14 C33.500,12 34.500,10.500 37,11Z" fill="#b03420"/>
<path d="M50.500,17.500 L86,35.500 C87.500,36.300 87.500,37.500 86.500,38.500 L71,49 L49,20 C48,18 49,17 50.500,17.500Z" fill="#aa2230"/>
<path d="M59.500,22.500 L77.500,39.500 C78.500,40.500 78,41.500 77,42 L66,46 L58,24.500 C57.500,23 58.500,22 59.500,22.500Z" fill="#a21c36"/>
<polygon points="0,0 100,74 0,74" fill="#28a070"/><polygon points="0,45 30,74 0,74" fill="#2aa86a"/>
<polygon points="12,8.880 92,68.080 100,74 29.500,74" fill="#23867f"/>
<polygon points="37,27.380 76,56.240 84,62.160 81.500,74 51,74" fill="#2075a8"/>
<path d="M49,36.260 L70,51.800 L56.500,60 C55,61 54,60.500 53.500,59Z" fill="#1e62c0"/></svg></div>
<div class="thumb" style="left:171.2px;top:299.3px;width:99.5px;height:74.3px"><svg width="99.5" height="74.3" viewBox="0 0 100 74" preserveAspectRatio="none"><defs><radialGradient id="t5b" cx="0.760" cy="0.320" r="0.750"><stop offset="0" stop-color="#8e120e"/><stop offset="0.45" stop-color="#7a0c08"/><stop offset="1" stop-color="#1c0604"/></radialGradient>
<linearGradient id="t5a" x1="0" y1="0.400" x2="1" y2="0.600"><stop offset="0" stop-color="#a04c12"/><stop offset="0.160" stop-color="#9c3616"/><stop offset="0.420" stop-color="#9c221a"/><stop offset="1" stop-color="#96181a"/></linearGradient></defs>
<rect width="100" height="74" fill="url(#t5b)"/><polygon points="0,0 100,74 0,74" fill="url(#t5a)"/></svg></div>
<div class="thumb" style="left:282.0px;top:299.3px;width:99.5px;height:74.3px"><svg width="99.5" height="74.3" viewBox="0 0 100 74" preserveAspectRatio="none"><rect width="100" height="74" fill="#37333f"/><polygon points="0,0 100,74 0,74" fill="#c9a682"/><polygon points="32,58 40,68 32,74" fill="#b99672"/><polygon points="56,62 64,74 56,74" fill="#bd9a76"/><defs><filter id="t6f"><feGaussianBlur stdDeviation="0.450"/></filter></defs><g filter="url(#t6f)" opacity="0.900"><rect x="31.5" y="12.5" width="5" height="5" rx="1" fill="#f6f5f4" transform="rotate(-35 34 15)"/><rect x="36.5" y="18.5" width="5" height="5" rx="1" fill="#33d17a" transform="rotate(-35 39 21)"/><rect x="43.5" y="14.5" width="5" height="5" rx="1" fill="#3584e4" transform="rotate(-35 46 17)"/><rect x="49.5" y="10.5" width="5" height="5" rx="1" fill="#e01b24" transform="rotate(-35 52 13)"/><rect x="55.5" y="6.5" width="5" height="5" rx="1" fill="#f6d32d" transform="rotate(-35 58 9)"/><rect x="61.5" y="2.5" width="5" height="5" rx="1" fill="#9141ac" transform="rotate(-35 64 5)"/><rect x="59.5" y="12.5" width="5" height="5" rx="1" fill="#deddda" transform="rotate(-35 62 15)"/><rect x="67.5" y="7.5" width="5" height="5" rx="1" fill="#26a269" transform="rotate(-35 70 10)"/><rect x="59.5" y="23.5" width="5" height="5" rx="1" fill="#ffffff" transform="rotate(-35 62 26)"/><rect x="63.5" y="29.5" width="5" height="5" rx="1" fill="#c061cb" transform="rotate(-35 66 32)"/><rect x="57.5" y="34.5" width="5" height="5" rx="1" fill="#ed333b" transform="rotate(-35 60 37)"/><rect x="77.5" y="20.5" width="5" height="5" rx="1" fill="#62a0ea" transform="rotate(-35 80 23)"/><rect x="84.5" y="15.5" width="5" height="5" rx="1" fill="#f6f5f4" transform="rotate(-35 87 18)"/><rect x="81.5" y="27.5" width="5" height="5" rx="1" fill="#33d17a" transform="rotate(-35 84 30)"/><rect x="88.5" y="23.5" width="5" height="5" rx="1" fill="#3584e4" transform="rotate(-35 91 26)"/><rect x="85.5" y="6.5" width="5" height="5" rx="1" fill="#e01b24" transform="rotate(-35 88 9)"/><rect x="91.5" y="11.5" width="5" height="5" rx="1" fill="#f6d32d" transform="rotate(-35 94 14)"/><rect x="95.5" y="19.5" width="5" height="5" rx="1" fill="#9141ac" transform="rotate(-35 98 22)"/><rect x="73.5" y="42.5" width="5" height="5" rx="1" fill="#deddda" transform="rotate(-35 76 45)"/><rect x="79.5" y="37.5" width="5" height="5" rx="1" fill="#26a269" transform="rotate(-35 82 40)"/><rect x="83.5" y="44.5" width="5" height="5" rx="1" fill="#ffffff" transform="rotate(-35 86 47)"/><rect x="95.5" y="47.5" width="5" height="5" rx="1" fill="#c061cb" transform="rotate(-35 98 50)"/><rect x="12.5" y="26.5" width="5" height="5" rx="1" fill="#3584e4" transform="rotate(-35 15 29)"/><rect x="17.5" y="32.5" width="5" height="5" rx="1" fill="#f6f5f4" transform="rotate(-35 20 35)"/><rect x="23.5" y="29.5" width="5" height="5" rx="1" fill="#f6d32d" transform="rotate(-35 26 32)"/><rect x="34.5" y="31.5" width="5" height="5" rx="1" fill="#865e3c" transform="rotate(-35 37 34)"/><rect x="39.5" y="37.5" width="5" height="5" rx="1" fill="#241f31" transform="rotate(-35 42 40)"/><rect x="0.5" y="45.5" width="5" height="5" rx="1" fill="#33d17a" transform="rotate(-35 3 48)"/><rect x="5.5" y="47.5" width="5" height="5" rx="1" fill="#ed333b" transform="rotate(-35 8 50)"/><rect x="2.5" y="54.5" width="5" height="5" rx="1" fill="#deddda" transform="rotate(-35 5 57)"/><rect x="19.5" y="52.5" width="5" height="5" rx="1" fill="#62a0ea" transform="rotate(-35 22 55)"/><rect x="25.5" y="48.5" width="5" height="5" rx="1" fill="#9141ac" transform="rotate(-35 28 51)"/><rect x="32.5" y="44.5" width="5" height="5" rx="1" fill="#26a269" transform="rotate(-35 35 47)"/><rect x="43.5" y="43.5" width="5" height="5" rx="1" fill="#ffffff" transform="rotate(-35 46 46)"/><rect x="37.5" y="52.5" width="5" height="5" rx="1" fill="#3584e4" transform="rotate(-35 40 55)"/><rect x="41.5" y="57.5" width="5" height="5" rx="1" fill="#f6f5f4" transform="rotate(-35 44 60)"/><rect x="47.5" y="54.5" width="5" height="5" rx="1" fill="#f6d32d" transform="rotate(-35 50 57)"/><rect x="54.5" y="47.5" width="5" height="5" rx="1" fill="#865e3c" transform="rotate(-35 57 50)"/><rect x="53.5" y="58.5" width="5" height="5" rx="1" fill="#241f31" transform="rotate(-35 56 61)"/><rect x="59.5" y="54.5" width="5" height="5" rx="1" fill="#33d17a" transform="rotate(-35 62 57)"/><rect x="71.5" y="54.5" width="5" height="5" rx="1" fill="#ed333b" transform="rotate(-35 74 57)"/><rect x="40.5" y="67.5" width="5" height="5" rx="1" fill="#deddda" transform="rotate(-35 43 70)"/><rect x="69.5" y="67.5" width="5" height="5" rx="1" fill="#62a0ea" transform="rotate(-35 72 70)"/><rect x="-1.5" y="58.5" width="5" height="5" rx="1" fill="#9141ac" transform="rotate(-35 1 61)"/></g><circle cx="91" cy="72" r="9" fill="#1c71d8"/><path d="M82,72 a9,9 0 0 1 7,-8.800 l2,6 l-3,6 z" fill="#2ec27e"/><circle cx="96" cy="74" r="3" fill="#f6f5f4"/><rect x="83.800" y="57.400" width="13" height="13" rx="3.500" fill="#241f31" transform="rotate(-35 90.300 63.900)"/><path d="M86.500 66.500 94 62.200M88.500 61.500l1 2.500M91.500 60.500l1 2.500M86.500 66.500l5.500 1.800 2-1.200" stroke="#fff" stroke-width="1.300" stroke-linecap="round" stroke-linejoin="round" fill="none"/></svg></div>
<div class="thumb" style="left:60.4px;top:385.0px;width:99.5px;height:74.3px"><svg width="99.5" height="74.3" viewBox="0 0 100 74" preserveAspectRatio="none"><defs><linearGradient id="t7a" x1="0" y1="0" x2="1" y2="1"><stop offset="0" stop-color="#2fb872"/><stop offset="0.6" stop-color="#34b076"/><stop offset="1" stop-color="#4a9e88"/></linearGradient>
<linearGradient id="t7b" x1="0" y1="0" x2="1" y2="1"><stop offset="0" stop-color="#06351e"/><stop offset="1" stop-color="#0a4628"/></linearGradient>
<pattern id="t7p" width="3" height="3" patternUnits="userSpaceOnUse"><circle cx="1.500" cy="1.500" r="0.500" fill="#0a5a38" opacity="0.350"/></pattern></defs>
<rect width="100" height="74" fill="url(#t7b)"/><polygon points="0,0 100,74 0,74" fill="url(#t7a)"/><rect width="100" height="74" fill="url(#t7p)"/>
<rect x="86" y="47" width="9" height="9" fill="none" stroke="#0f5a36" stroke-width="1" transform="rotate(-12 90 51)"/><circle cx="90.500" cy="51.500" r="1.800" fill="#04301a"/></svg></div>
<div class="thumb" style="left:171.2px;top:385.0px;width:99.5px;height:74.3px"><svg width="99.5" height="74.3" viewBox="0 0 100 74" preserveAspectRatio="none"><rect width="100" height="74" fill="#77767b"/></svg></div>
<div class="thumb" style="left:282.0px;top:385.0px;width:99.5px;height:74.3px"><svg width="99.5" height="74.3" viewBox="0 0 100 74" preserveAspectRatio="none"><defs><linearGradient id="t9a" x1="0" y1="0" x2="0.600" y2="1"><stop offset="0" stop-color="#d6a86e"/><stop offset="0.6" stop-color="#c4945c"/><stop offset="1" stop-color="#a87a44"/></linearGradient>
<radialGradient id="t9b" cx="0.560" cy="0.300" r="0.700"><stop offset="0" stop-color="#5e4029"/><stop offset="0.5" stop-color="#432c1c"/><stop offset="1" stop-color="#1a100a"/></radialGradient>
<pattern id="t9p" width="2.200" height="74" patternUnits="userSpaceOnUse"><rect x="0" y="0" width="0.900" height="74" fill="#000" opacity="0.160"/></pattern></defs>
<rect width="100" height="74" fill="url(#t9b)"/><polygon points="0,0 100,74 0,74" fill="url(#t9a)"/><rect width="100" height="74" fill="url(#t9p)"/></svg></div>
<div class="thumb" style="left:60.4px;top:471.1px;width:99.5px;height:74.3px"><svg width="99.5" height="74.3" viewBox="0 0 100 74" preserveAspectRatio="none"><rect width="100" height="74" fill="#101d1d"/><polygon points="0,0 100,74 0,74" fill="#5eb2e2"/><polygon points="0,4 8,12 0,20" fill="#4a9cd4"/></svg></div>
<div class="thumb" style="left:171.2px;top:471.1px;width:99.5px;height:74.3px"><svg width="99.5" height="74.3" viewBox="0 0 100 74" preserveAspectRatio="none"><defs><linearGradient id="t11" x1="0" y1="0" x2="1" y2="0.400"><stop offset="0" stop-color="#8c1e38"/><stop offset="0.600" stop-color="#6e1a30"/><stop offset="1" stop-color="#9c1a30"/></linearGradient></defs>
<rect width="100" height="74" fill="#c84a00"/><path d="M7,0 L100,0 L100,74 L81,74 L81,19 L62,13 L40,7 L20,2.500Z" fill="url(#t11)"/><polygon points="81,16 100,10 100,74 81,74" fill="#a01a30"/>
<g stroke="#8c1e38" stroke-width="4.600" stroke-linecap="round"><path d="M19,0V4M38,4V10.500M57.500,8V13.500"/></g>
<g stroke="#c84a00" stroke-width="4" stroke-linecap="round"><path d="M31.500,12V3.500M48.500,16V5M64,30V3M70,30V7.500M78.500,30V9.500"/></g>
<polygon points="0,0 100,74 0,74" fill="#82b6f2"/></svg></div>
<div class="thumb" style="left:282.0px;top:471.1px;width:99.5px;height:74.3px"><svg width="99.5" height="74.3" viewBox="0 0 100 74" preserveAspectRatio="none"><defs><linearGradient id="t12" x1="0" y1="0" x2="1" y2="0"><stop offset="0" stop-color="#149cae"/><stop offset="0.45" stop-color="#1ab4cc"/><stop offset="1" stop-color="#22c6ea"/></linearGradient></defs>
<rect width="100" height="74" fill="url(#t12)"/><polygon points="40,0 70,0 55,14" fill="#18a8c4"/><polygon points="58,10 78,10 68,20" fill="#3cd4f4"/><polygon points="76,0 92,0 92,16" fill="#30d0f2"/><polygon points="8,6 20,18 8,18" fill="#1aa6b8"/><g><polygon points="19.8,-2.4 29.8,-2.4 19.8,7.6" fill="#7ff0ff" opacity="0.06"/><polygon points="39.1,-1.2 39.1,8.8 29.1,8.8" fill="#7ff0ff" opacity="0.15"/><polygon points="38.4,-2.2 44.4,-2.2 38.4,3.8" fill="#7ff0ff" opacity="0.06"/><polygon points="58.7,-0.3 58.7,9.7 48.7,9.7" fill="#7ff0ff" opacity="0.19"/><polygon points="-2.2,8.7 7.8,8.7 7.8,18.7" fill="#0a6a88" opacity="0.05"/><polygon points="13.2,8.3 13.2,14.3 7.2,14.3" fill="#0a6a88" opacity="0.15"/><polygon points="30.9,11.0 40.9,21.0 30.9,21.0" fill="#7ff0ff" opacity="0.15"/><polygon points="37.7,7.1 47.7,17.1 37.7,17.1" fill="#0a6a88" opacity="0.18"/><polygon points="48.1,8.2 54.1,8.2 48.1,14.2" fill="#0a6a88" opacity="0.15"/><polygon points="74.8,10.2 74.8,26.2 58.8,26.2" fill="#7ff0ff" opacity="0.07"/><polygon points="67.8,7.6 77.8,7.6 67.8,17.6" fill="#7ff0ff" opacity="0.09"/><polygon points="80.4,10.9 96.4,10.9 96.4,26.9" fill="#7ff0ff" opacity="0.12"/><polygon points="87.6,9.9 93.6,9.9 87.6,15.9" fill="#7ff0ff" opacity="0.06"/><polygon points="97.9,7.4 113.9,7.4 113.9,23.4" fill="#7ff0ff" opacity="0.09"/><polygon points="-2.5,20.5 7.5,20.5 -2.5,30.5" fill="#0a6a88" opacity="0.08"/><polygon points="19.2,19.2 29.2,29.2 19.2,29.2" fill="#7ff0ff" opacity="0.17"/><polygon points="29.1,19.9 39.1,19.9 39.1,29.9" fill="#7ff0ff" opacity="0.18"/><polygon points="38.5,19.1 48.5,29.1 38.5,29.1" fill="#7ff0ff" opacity="0.17"/><polygon points="77.8,18.0 83.8,18.0 77.8,24.0" fill="#7ff0ff" opacity="0.06"/><polygon points="90.7,18.1 100.7,28.1 90.7,28.1" fill="#7ff0ff" opacity="0.11"/><polygon points="99.1,18.7 115.1,34.7 99.1,34.7" fill="#7ff0ff" opacity="0.05"/><polygon points="-0.2,28.0 5.8,28.0 5.8,34.0" fill="#7ff0ff" opacity="0.11"/><polygon points="30.5,29.8 40.5,29.8 30.5,39.8" fill="#7ff0ff" opacity="0.17"/><polygon points="38.7,27.3 48.7,37.3 38.7,37.3" fill="#0a6a88" opacity="0.19"/><polygon points="58.1,28.1 64.1,34.1 58.1,34.1" fill="#7ff0ff" opacity="0.20"/><polygon points="68.0,27.6 78.0,27.6 78.0,37.6" fill="#7ff0ff" opacity="0.14"/><polygon points="88.5,29.2 88.5,39.2 78.5,39.2" fill="#0a6a88" opacity="0.18"/><polygon points="90.2,28.6 106.2,44.6 90.2,44.6" fill="#7ff0ff" opacity="0.12"/><polygon points="7.2,40.8 7.2,50.8 -2.8,50.8" fill="#0a6a88" opacity="0.06"/><polygon points="8.3,39.9 18.3,39.9 8.3,49.9" fill="#0a6a88" opacity="0.09"/><polygon points="18.3,37.2 34.3,37.2 18.3,53.2" fill="#0a6a88" opacity="0.07"/><polygon points="37.1,40.2 37.1,50.2 27.1,50.2" fill="#7ff0ff" opacity="0.18"/><polygon points="37.9,41.0 53.9,41.0 37.9,57.0" fill="#0a6a88" opacity="0.16"/><polygon points="49.5,37.8 65.5,37.8 65.5,53.8" fill="#0a6a88" opacity="0.06"/><polygon points="80.0,37.5 86.0,37.5 86.0,43.5" fill="#0a6a88" opacity="0.06"/><polygon points="88.0,38.0 94.0,44.0 88.0,44.0" fill="#7ff0ff" opacity="0.13"/><polygon points="19.6,48.9 19.6,58.9 9.6,58.9" fill="#0a6a88" opacity="0.18"/><polygon points="38.4,47.7 44.4,47.7 44.4,53.7" fill="#0a6a88" opacity="0.18"/><polygon points="68.1,50.1 84.1,50.1 68.1,66.1" fill="#7ff0ff" opacity="0.07"/><polygon points="78.9,47.6 84.9,53.6 78.9,53.6" fill="#7ff0ff" opacity="0.13"/><polygon points="90.4,48.2 106.4,64.2 90.4,64.2" fill="#7ff0ff" opacity="0.06"/><polygon points="18.1,59.2 18.1,69.2 8.1,69.2" fill="#7ff0ff" opacity="0.17"/><polygon points="20.0,59.6 36.0,75.6 20.0,75.6" fill="#7ff0ff" opacity="0.12"/><polygon points="44.8,57.7 44.8,63.7 38.8,63.7" fill="#7ff0ff" opacity="0.12"/><polygon points="49.0,57.8 55.0,63.8 49.0,63.8" fill="#7ff0ff" opacity="0.15"/><polygon points="68.9,58.2 68.9,68.2 58.9,68.2" fill="#7ff0ff" opacity="0.12"/><polygon points="100.0,60.6 100.0,70.6 90.0,70.6" fill="#0a6a88" opacity="0.10"/><polygon points="100.4,58.4 110.4,58.4 100.4,68.4" fill="#7ff0ff" opacity="0.06"/><polygon points="20.3,67.3 26.3,73.3 20.3,73.3" fill="#0a6a88" opacity="0.13"/><polygon points="27.3,67.6 43.3,67.6 27.3,83.6" fill="#7ff0ff" opacity="0.09"/><polygon points="38.0,70.4 54.0,70.4 38.0,86.4" fill="#7ff0ff" opacity="0.16"/><polygon points="48.7,71.0 54.7,77.0 48.7,77.0" fill="#0a6a88" opacity="0.19"/><polygon points="69.3,67.6 69.3,77.6 59.3,77.6" fill="#0a6a88" opacity="0.16"/><polygon points="69.0,68.4 79.0,78.4 69.0,78.4" fill="#7ff0ff" opacity="0.15"/><polygon points="89.6,70.8 105.6,86.8 89.6,86.8" fill="#0a6a88" opacity="0.19"/><polygon points="98.7,69.3 108.7,69.3 108.7,79.3" fill="#0a6a88" opacity="0.10"/></g></svg></div>
<div style="position:absolute;left:439.1px;top:5.0px;width:1.9px;height:217px;background:#cdcdcd;border-radius:1px"></div>
 </div>
 <div id="vdiv"></div>
</div>
</body>
</html>
